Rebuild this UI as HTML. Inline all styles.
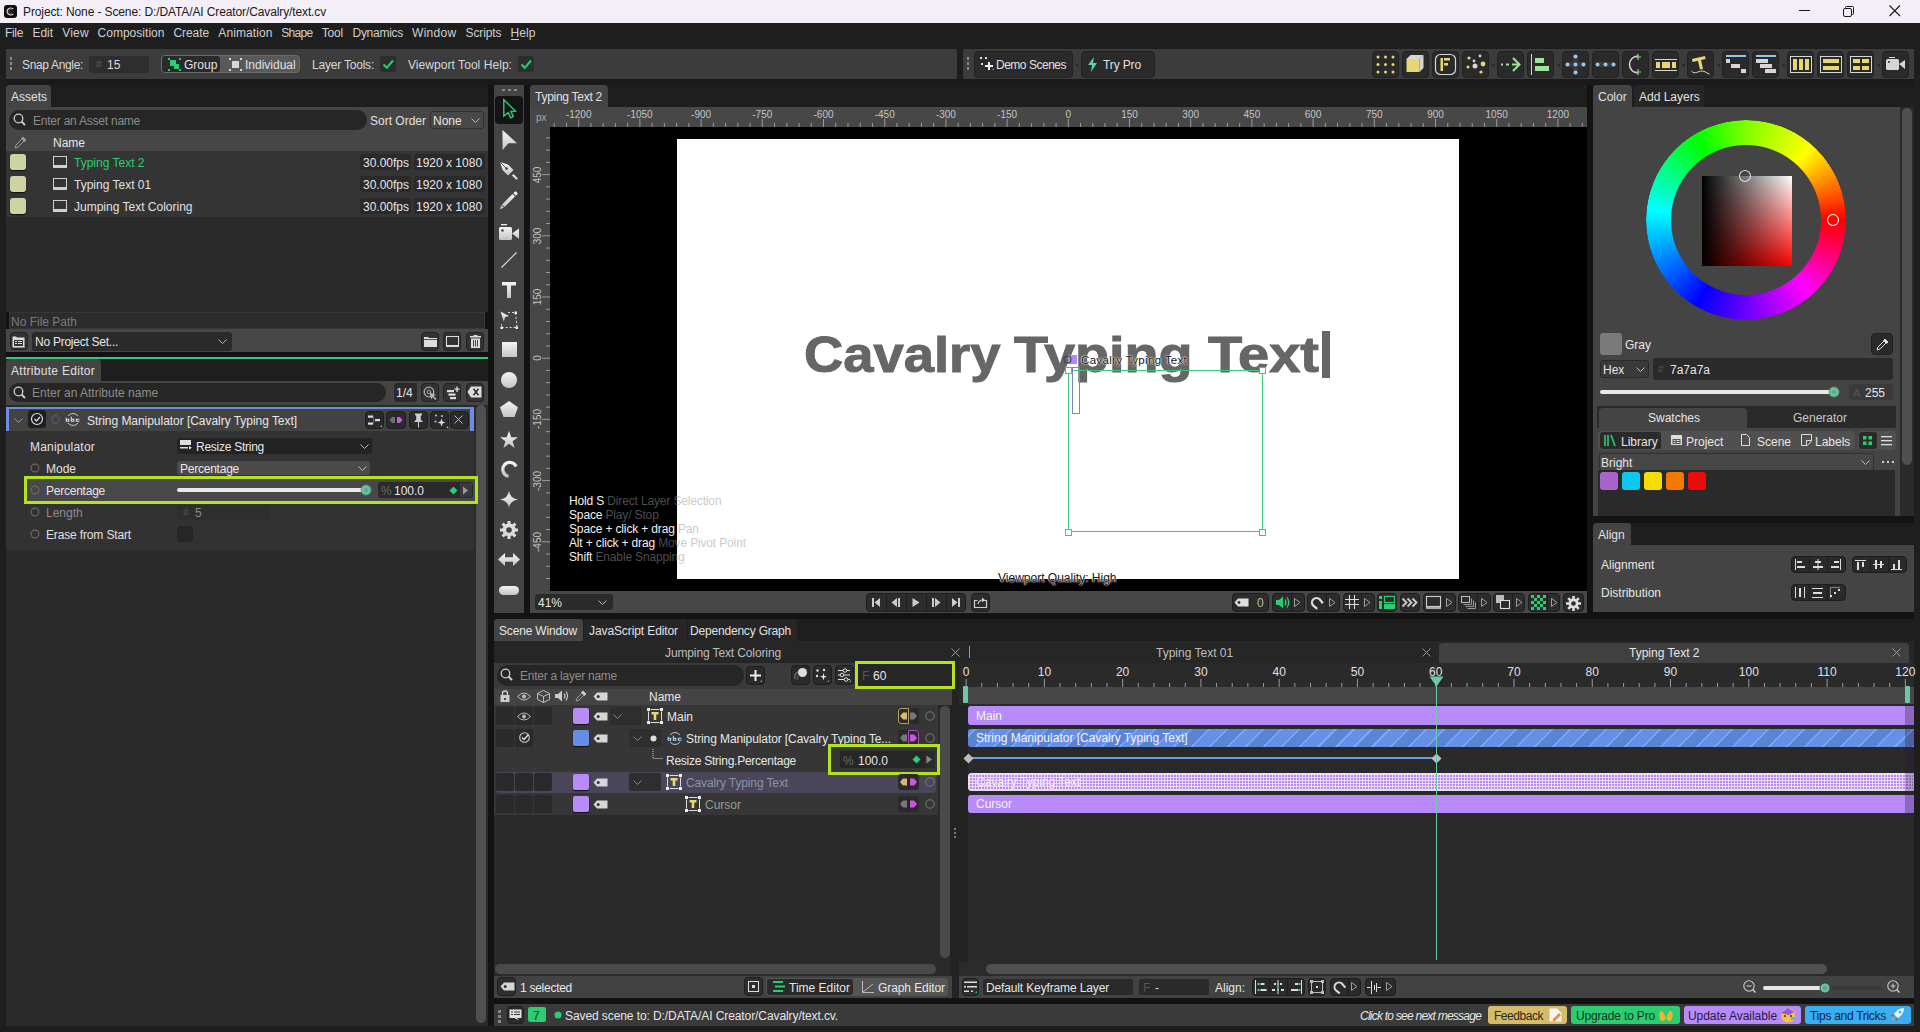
<!DOCTYPE html>
<html><head><meta charset="utf-8">
<style>
*{box-sizing:border-box;margin:0;padding:0}
html,body{width:1920px;height:1032px;overflow:hidden;background:#1e1e1e;font-family:"Liberation Sans",sans-serif;font-size:12px;color:#dcdcdc}
.a{position:absolute}
.t{position:absolute;white-space:nowrap;line-height:14px;height:14px}
svg{position:absolute;overflow:visible}
</style></head><body>
<!-- p1 -->
<div class="a" style="left:0px;top:0px;width:1920px;height:23px;background:#f4eef6"></div>
<div class="a" style="left:4px;top:5px;width:13px;height:13px;background:#0e0e0e;border-radius:3px"></div>
<svg style="left:4px;top:5px" width="13" height="13" viewBox="0 0 13 13"><path d="M9.3 4.2 A3.5 3.5 0 1 0 9.3 8.8" stroke="#d8d8d8" stroke-width="1.2" fill="none"/><path d="M8 5.2 A1.8 1.8 0 1 0 8 7.8" stroke="#777" stroke-width="0.7" fill="none"/></svg>
<div class="t" style="left:23px;top:5px;color:#1a1a1a;letter-spacing:-0.115px">Project: None - Scene: D:/DATA/AI Creator/Cavalry/text.cv</div>
<div class="a" style="left:1799px;top:10px;width:11px;height:1px;background:#1a1a1a"></div>
<svg style="left:1843px;top:6px" width="12" height="12" viewBox="0 0 12 12"><rect x="0.5" y="2.5" width="8" height="8" rx="1.5" fill="none" stroke="#1a1a1a"/><path d="M2.5 2.5V1.5Q2.5 0.5 3.5 0.5H9.5Q10.5 0.5 10.5 1.5V7.5Q10.5 8.5 9.5 8.5H8.5" fill="none" stroke="#1a1a1a"/></svg>
<svg style="left:1889px;top:5px" width="12" height="12" viewBox="0 0 12 12"><path d="M0.5 0.5L11 11M11 0.5L0.5 11" stroke="#1a1a1a" stroke-width="1.1"/></svg>
<div class="a" style="left:0px;top:23px;width:1920px;height:26px;background:#1e1e1e"></div>
<div class="t" style="left:5px;top:26px;color:#cfcfcf;letter-spacing:-0.336px">File</div>
<div class="t" style="left:32.5px;top:26px;color:#cfcfcf;letter-spacing:-0.043px">Edit</div>
<div class="t" style="left:62.3px;top:26px;color:#cfcfcf;letter-spacing:0.176px">View</div>
<div class="t" style="left:97.5px;top:26px;color:#cfcfcf;letter-spacing:0.027px">Composition</div>
<div class="t" style="left:173.5px;top:26px;color:#cfcfcf;letter-spacing:-0.086px">Create</div>
<div class="t" style="left:218.3px;top:26px;color:#cfcfcf;letter-spacing:0.093px">Animation</div>
<div class="t" style="left:281.3px;top:26px;color:#cfcfcf;letter-spacing:-0.698px">Shape</div>
<div class="t" style="left:321.8px;top:26px;color:#cfcfcf;letter-spacing:-0.204px">Tool</div>
<div class="t" style="left:352.5px;top:26px;color:#cfcfcf;letter-spacing:-0.273px">Dynamics</div>
<div class="t" style="left:412px;top:26px;color:#cfcfcf;letter-spacing:0.302px">Window</div>
<div class="t" style="left:465.5px;top:26px;color:#cfcfcf;letter-spacing:-0.096px">Scripts</div>
<div class="t" style="left:510.5px;top:26px;color:#cfcfcf;letter-spacing:0.078px">Help</div>
<div class="a" style="left:511px;top:39px;width:8px;height:1px;background:#cfcfcf"></div>
<div class="a" style="left:6px;top:79px;width:1908px;height:947px;background:#131313"></div>
<div class="a" style="left:6px;top:79px;width:1908px;height:6px;background:#1a1a1a"></div>
<div class="a" style="left:6px;top:49px;width:951px;height:30px;background:#3c3c3c"></div>
<div class="a" style="left:10px;top:57px;width:2px;height:3px;background:#8a8a8a"></div>
<div class="a" style="left:10px;top:62px;width:2px;height:3px;background:#8a8a8a"></div>
<div class="a" style="left:10px;top:67px;width:2px;height:3px;background:#8a8a8a"></div>
<div class="t" style="left:22px;top:58px;color:#d8d8d8;letter-spacing:-0.337px">Snap Angle:</div>
<div class="a" style="left:89px;top:56px;width:60px;height:17px;background:#2e2e2e;border-radius:3px"></div>
<div class="t" style="left:96px;top:58px;color:#5a5a5a;font-size:10px">#</div>
<div class="t" style="left:107px;top:58px;color:#dcdcdc">15</div>
<div class="a" style="left:161px;top:55px;width:139px;height:18px;background:#595959;border-radius:4px;border:1px solid #6a6a6a"></div>
<div class="a" style="left:162px;top:56px;width:58px;height:16px;background:#2a2a2a;border-radius:3px"></div>
<svg style="left:168px;top:58px" width="13" height="13" viewBox="0 0 13 13"><rect x="0" y="0" width="2" height="2" fill="#2ecc71"/><rect x="11" y="0" width="2" height="2" fill="#2ecc71"/><rect x="0" y="11" width="2" height="2" fill="#2ecc71"/><rect x="11" y="11" width="2" height="2" fill="#2ecc71"/><rect x="2" y="2" width="6" height="6" fill="#2ecc71"/><rect x="6" y="6" width="5" height="5" fill="#2ecc71"/></svg>
<div class="t" style="left:184px;top:58px;color:#e0e0e0">Group</div>
<svg style="left:229px;top:58px" width="13" height="13" viewBox="0 0 13 13"><rect x="0" y="0" width="2" height="2" fill="#d8d8d8"/><rect x="11" y="0" width="2" height="2" fill="#d8d8d8"/><rect x="0" y="11" width="2" height="2" fill="#d8d8d8"/><rect x="11" y="11" width="2" height="2" fill="#d8d8d8"/><rect x="3" y="3" width="7" height="7" fill="#d8d8d8"/></svg>
<div class="t" style="left:245px;top:58px;color:#e0e0e0">Individual</div>
<div class="t" style="left:312px;top:58px;color:#d8d8d8;letter-spacing:-0.206px">Layer Tools:</div>
<div class="a" style="left:380px;top:56px;width:16px;height:16px;background:#2d2d2d;border-radius:3px"></div>
<svg style="left:380px;top:56px" width="16" height="16" viewBox="0 0 16 16"><path d="M3.5 8.5L6.8 11.8L13 4.5" stroke="#2ecc71" stroke-width="2" fill="none"/></svg>
<div class="t" style="left:408px;top:58px;color:#d8d8d8;letter-spacing:0.056px">Viewport Tool Help:</div>
<div class="a" style="left:518px;top:56px;width:16px;height:16px;background:#2d2d2d;border-radius:3px"></div>
<svg style="left:518px;top:56px" width="16" height="16" viewBox="0 0 16 16"><path d="M3.5 8.5L6.8 11.8L13 4.5" stroke="#2ecc71" stroke-width="2" fill="none"/></svg>
<div class="a" style="left:963px;top:49px;width:951px;height:30px;background:#3c3c3c"></div>
<div class="a" style="left:967px;top:57px;width:2px;height:3px;background:#8a8a8a"></div>
<div class="a" style="left:967px;top:62px;width:2px;height:3px;background:#8a8a8a"></div>
<div class="a" style="left:967px;top:67px;width:2px;height:3px;background:#8a8a8a"></div>
<div class="a" style="left:974px;top:51px;width:99px;height:27px;background:#2a2a2a;border:1px solid #222;border-radius:4px"></div>
<svg style="left:980px;top:57px" width="15" height="15" viewBox="0 0 15 15"><rect x="0" y="0" width="2" height="2" fill="#ddd"/><rect x="5" y="0" width="2" height="2" fill="#ddd"/><rect x="1" y="6" width="2" height="2" fill="#ddd"/><path d="M9 5V13M5 9H13" stroke="#eee" stroke-width="2"/><path d="M12 13L14 11V13Z" fill="#2ecc71"/></svg>
<div class="t" style="left:996px;top:58px;color:#e0e0e0;letter-spacing:-0.487px">Demo Scenes</div>
<div class="a" style="left:1076px;top:64px;width:2px;height:2px;background:#2a2a2a"></div>
<div class="a" style="left:1081px;top:51px;width:74px;height:27px;background:#2a2a2a;border:1px solid #222;border-radius:4px"></div>
<svg style="left:1088px;top:57px" width="9" height="15" viewBox="0 0 9 15"><path d="M6 0L0 8H4L3 15L9 6H5Z" fill="#5fcfa9"/></svg>
<div class="t" style="left:1103px;top:58px;color:#e0e0e0;letter-spacing:-0.127px">Try Pro</div>
<div class="a" style="left:1372px;top:51px;width:27px;height:27px;background:#2a2a2a;border:1px solid #222;border-radius:4px"></div>
<div class="a" style="left:1402px;top:51px;width:27px;height:27px;background:#2a2a2a;border:1px solid #222;border-radius:4px"></div>
<div class="a" style="left:1432px;top:51px;width:27px;height:27px;background:#2a2a2a;border:1px solid #222;border-radius:4px"></div>
<div class="a" style="left:1462px;top:51px;width:27px;height:27px;background:#2a2a2a;border:1px solid #222;border-radius:4px"></div>
<div class="a" style="left:1497px;top:51px;width:27px;height:27px;background:#2a2a2a;border:1px solid #222;border-radius:4px"></div>
<div class="a" style="left:1527px;top:51px;width:27px;height:27px;background:#2a2a2a;border:1px solid #222;border-radius:4px"></div>
<div class="a" style="left:1562px;top:51px;width:27px;height:27px;background:#2a2a2a;border:1px solid #222;border-radius:4px"></div>
<div class="a" style="left:1592px;top:51px;width:27px;height:27px;background:#2a2a2a;border:1px solid #222;border-radius:4px"></div>
<div class="a" style="left:1622px;top:51px;width:27px;height:27px;background:#2a2a2a;border:1px solid #222;border-radius:4px"></div>
<div class="a" style="left:1652px;top:51px;width:27px;height:27px;background:#2a2a2a;border:1px solid #222;border-radius:4px"></div>
<div class="a" style="left:1687px;top:51px;width:27px;height:27px;background:#2a2a2a;border:1px solid #222;border-radius:4px"></div>
<div class="a" style="left:1722px;top:51px;width:27px;height:27px;background:#2a2a2a;border:1px solid #222;border-radius:4px"></div>
<div class="a" style="left:1752px;top:51px;width:27px;height:27px;background:#2a2a2a;border:1px solid #222;border-radius:4px"></div>
<div class="a" style="left:1787px;top:51px;width:27px;height:27px;background:#2a2a2a;border:1px solid #222;border-radius:4px"></div>
<div class="a" style="left:1817px;top:51px;width:27px;height:27px;background:#2a2a2a;border:1px solid #222;border-radius:4px"></div>
<div class="a" style="left:1847px;top:51px;width:27px;height:27px;background:#2a2a2a;border:1px solid #222;border-radius:4px"></div>
<div class="a" style="left:1882px;top:51px;width:27px;height:27px;background:#2a2a2a;border:1px solid #222;border-radius:4px"></div>
<div class="a" style="left:1492px;top:64px;width:3px;height:3px;background:#2a2a2a;border-radius:50%"></div>
<div class="a" style="left:1557px;top:64px;width:3px;height:3px;background:#2a2a2a;border-radius:50%"></div>
<div class="a" style="left:1682px;top:64px;width:3px;height:3px;background:#2a2a2a;border-radius:50%"></div>
<div class="a" style="left:1717px;top:64px;width:3px;height:3px;background:#2a2a2a;border-radius:50%"></div>
<div class="a" style="left:1782px;top:64px;width:3px;height:3px;background:#2a2a2a;border-radius:50%"></div>
<div class="a" style="left:1877px;top:64px;width:3px;height:3px;background:#2a2a2a;border-radius:50%"></div>
<svg style="left:1372px;top:51px" width="27" height="27" viewBox="0 0 27 27"><circle cx="6" cy="6" r="1.5" fill="#e6d774"/><circle cx="6" cy="13.5" r="1.5" fill="#e6d774"/><circle cx="6" cy="21" r="1.5" fill="#e6d774"/><circle cx="13.5" cy="6" r="1.5" fill="#e6d774"/><circle cx="13.5" cy="13.5" r="1.5" fill="#e6d774"/><circle cx="13.5" cy="21" r="1.5" fill="#e6d774"/><circle cx="21" cy="6" r="1.5" fill="#e6d774"/><circle cx="21" cy="13.5" r="1.5" fill="#e6d774"/><circle cx="21" cy="21" r="1.5" fill="#e6d774"/></svg>
<svg style="left:1402px;top:51px" width="27" height="27" viewBox="0 0 27 27"><path d="M4.5 8L8.5 4H21.5L17.5 8Z" fill="#d6d6d6"/><path d="M17.5 8L21.5 4V17L17.5 21Z" fill="#d6d6d6"/><rect x="4.5" y="8" width="13" height="13" fill="#e6d774"/></svg>
<svg style="left:1432px;top:51px" width="27" height="27" viewBox="0 0 27 27"><rect x="3.5" y="3.5" width="20" height="20" rx="5" fill="none" stroke="#d6d6d6" stroke-width="1.2"/><rect x="8.5" y="7" width="2.5" height="13" fill="#e6d774"/><rect x="12" y="7" width="6" height="2.5" fill="#e6d774"/><rect x="12" y="12" width="4" height="2.5" fill="#e6d774"/></svg>
<svg style="left:1462px;top:51px" width="27" height="27" viewBox="0 0 27 27"><circle cx="7" cy="7" r="1.6" fill="#e6d774"/><circle cx="18" cy="5" r="1.4" fill="#d6d6d6"/><circle cx="12" cy="10" r="1.4" fill="#d6d6d6"/><circle cx="21" cy="13" r="2.4" fill="#e6d774"/><circle cx="6" cy="16" r="1.5" fill="#e6d774"/><circle cx="13" cy="15" r="2.5" fill="#d6d6d6"/><circle cx="19" cy="21" r="1.6" fill="#e6d774"/></svg>
<svg style="left:1497px;top:51px" width="27" height="27" viewBox="0 0 27 27"><path d="M4 13.5H6M9 13.5H12M15 13.5H22" stroke="#9ee39a" stroke-width="2"/><path d="M16 7L22.5 13.5L16 20" stroke="#9ee39a" stroke-width="2" fill="none"/></svg>
<svg style="left:1527px;top:51px" width="27" height="27" viewBox="0 0 27 27"><rect x="4" y="3" width="1" height="21" fill="#d6d6d6"/><rect x="8" y="7" width="9" height="5" fill="#9ee39a"/><rect x="8" y="15" width="14" height="5" fill="#9ee39a"/></svg>
<svg style="left:1562px;top:51px" width="27" height="27" viewBox="0 0 27 27"><rect x="11" y="4" width="5" height="19" fill="#3a3a3a"/><rect x="4" y="11" width="19" height="5" fill="#3a3a3a"/><circle cx="13.5" cy="5.5" r="2" fill="#8ec7f7"/><circle cx="5.5" cy="13.5" r="2" fill="#8ec7f7"/><circle cx="13.5" cy="13.5" r="2" fill="#8ec7f7"/><circle cx="21.5" cy="13.5" r="2" fill="#8ec7f7"/><circle cx="13.5" cy="21.5" r="2" fill="#8ec7f7"/></svg>
<svg style="left:1592px;top:51px" width="27" height="27" viewBox="0 0 27 27"><rect x="4" y="11" width="20" height="5" rx="2" fill="#3a3a3a"/><circle cx="5.5" cy="13.5" r="2" fill="#8ec7f7"/><circle cx="13.5" cy="13.5" r="2" fill="#8ec7f7"/><circle cx="21.5" cy="13.5" r="2" fill="#8ec7f7"/></svg>
<svg style="left:1622px;top:51px" width="27" height="27" viewBox="0 0 27 27"><path d="M16 5A8.5 8.5 0 0 0 16 22" stroke="#d6d6d6" stroke-width="1.5" fill="none"/><path d="M16 3V9M13 6H19M16 18V24M13 21H19" stroke="#8fd48a" stroke-width="1.2"/></svg>
<svg style="left:1652px;top:51px" width="27" height="27" viewBox="0 0 27 27"><rect x="3" y="8" width="22" height="1" fill="#d6d6d6"/><rect x="3" y="19" width="22" height="1" fill="#d6d6d6"/><rect x="4" y="11" width="4" height="6" fill="#e6d774"/><rect x="10" y="11" width="8" height="6" fill="#e6d774"/><rect x="20" y="11" width="4" height="6" fill="#e6d774"/></svg>
<svg style="left:1687px;top:51px" width="27" height="27" viewBox="0 0 27 27"><path d="M5 8L18 5L18.6 8L14 9L16 18L13 18.6L11 9.8L5.6 11Z" fill="#e6d774"/><path d="M4.5 20C8 24 11 20 15 20C18 20 19 22 22.5 23" stroke="#d6d6d6" stroke-width="1" fill="none"/></svg>
<svg style="left:1722px;top:51px" width="27" height="27" viewBox="0 0 27 27"><rect x="4" y="4" width="20" height="2" fill="#8ec7f7"/><rect x="4" y="8" width="4" height="4" fill="#d6d6d6"/><rect x="9" y="13" width="9" height="4" fill="#d6d6d6"/><rect x="19" y="18" width="5" height="4" fill="#d6d6d6"/></svg>
<svg style="left:1752px;top:51px" width="27" height="27" viewBox="0 0 27 27"><rect x="4" y="4" width="20" height="2" fill="#8ec7f7"/><rect x="4" y="8" width="12" height="4" fill="#d6d6d6"/><rect x="8" y="13" width="12" height="4" fill="#d6d6d6"/><rect x="13" y="18" width="11" height="4" fill="#d6d6d6"/></svg>
<svg style="left:1787px;top:51px" width="27" height="27" viewBox="0 0 27 27"><rect x="3.5" y="5.5" width="21" height="16" fill="none" stroke="#d6d6d6" stroke-width="1"/><rect x="6" y="8" width="4" height="11" fill="#e6d774"/><rect x="12" y="8" width="4" height="11" fill="#e6d774"/><rect x="18" y="8" width="4" height="11" fill="#e6d774"/></svg>
<svg style="left:1817px;top:51px" width="27" height="27" viewBox="0 0 27 27"><rect x="3.5" y="5.5" width="21" height="16" fill="none" stroke="#d6d6d6" stroke-width="1"/><rect x="6" y="8" width="16" height="4" fill="#e6d774"/><rect x="6" y="15" width="16" height="4" fill="#e6d774"/></svg>
<svg style="left:1847px;top:51px" width="27" height="27" viewBox="0 0 27 27"><rect x="3.5" y="5.5" width="21" height="16" fill="none" stroke="#d6d6d6" stroke-width="1"/><rect x="6" y="8" width="7" height="4" fill="#e6d774"/><rect x="15" y="8" width="7" height="4" fill="#e6d774"/><rect x="6" y="15" width="7" height="4" fill="#e6d774"/><rect x="15" y="15" width="7" height="4" fill="#e6d774"/></svg>
<svg style="left:1882px;top:51px" width="27" height="27" viewBox="0 0 27 27"><rect x="4" y="8" width="13" height="11" rx="1.5" fill="#d6d6d6"/><rect x="7" y="6" width="6" height="1" fill="#d6d6d6"/><path d="M17 13L23 9V18Z" fill="#d6d6d6"/><circle cx="7" cy="11" r="1" fill="#2a2a2a"/></svg>
<!-- p2 -->
<div class="a" style="left:6px;top:85px;width:482px;height:22px;background:#1e1e1e"></div>
<div class="a" style="left:6px;top:85px;width:45px;height:22px;background:#444;border-radius:4px 4px 0 0"></div>
<div class="t" style="left:11px;top:90px;color:#e0e0e0">Assets</div>
<div class="a" style="left:6px;top:107px;width:482px;height:44px;background:#464646"></div>
<div class="a" style="left:9px;top:110px;width:358px;height:20px;background:#262626;border-radius:10px"></div>
<svg style="left:13px;top:113px" width="14" height="14" viewBox="0 0 14 14"><circle cx="5.5" cy="5.5" r="4.3" stroke="#cfcfcf" stroke-width="1.3" fill="none"/><path d="M8.6 8.6L12 12" stroke="#cfcfcf" stroke-width="2"/></svg>
<div class="t" style="left:33px;top:114px;color:#8c8c8c;letter-spacing:-0.229px">Enter an Asset name</div>
<div class="t" style="left:370px;top:114px;color:#e0e0e0">Sort Order</div>
<div class="a" style="left:430px;top:111px;width:54px;height:18px;background:#484848;border:1px solid #303030;border-radius:3px"></div>
<div class="t" style="left:433px;top:114px;color:#e6e6e6">None</div>
<svg style="left:471px;top:118px" width="9" height="5" viewBox="0 0 9 5"><path d="M0.5 0.5L4.5 4.5L8.5 0.5" stroke="#bbb" stroke-width="1" fill="none"/></svg>
<svg style="left:14px;top:136px" width="13" height="13" viewBox="0 0 13 13"><path d="M1 12L2 9L8 3L10 5L4 11Z" fill="none" stroke="#9a9a9a" stroke-width="1"/><path d="M7.5 2.5L10.5 5.5M9 1L12 4L10.5 5.5L7.5 2.5Z" fill="#9a9a9a" stroke="#9a9a9a"/></svg>
<div class="t" style="left:53px;top:136px;color:#e6e6e6">Name</div>
<div class="a" style="left:6px;top:151px;width:482px;height:66px;background:#343434"></div>
<div class="a" style="left:6px;top:217px;width:482px;height:95px;background:#2a2a2a"></div>
<div class="a" style="left:10px;top:154px;width:16px;height:16px;background:#cfd3a4;border-radius:3px;box-shadow:0 1px 1px #111"></div>
<svg style="left:53px;top:156px" width="14" height="12" viewBox="0 0 14 12"><rect x="0.5" y="0.5" width="13" height="9" fill="none" stroke="#cfcfcf" stroke-width="1"/><rect x="0" y="9" width="14" height="3" fill="#cfcfcf"/></svg>
<div class="t" style="left:74px;top:156px;color:#2ecc71">Typing Text 2</div>
<div class="a" style="left:360px;top:154px;width:51px;height:16px;background:#2a2a2a;border-radius:3px"></div>
<div class="t" style="left:363px;top:156px;color:#e6e6e6">30.00fps</div>
<div class="a" style="left:414px;top:154px;width:71px;height:16px;background:#2a2a2a;border-radius:3px"></div>
<div class="t" style="left:416px;top:156px;color:#e6e6e6">1920 x 1080</div>
<div class="a" style="left:10px;top:176px;width:16px;height:16px;background:#cfd3a4;border-radius:3px;box-shadow:0 1px 1px #111"></div>
<svg style="left:53px;top:178px" width="14" height="12" viewBox="0 0 14 12"><rect x="0.5" y="0.5" width="13" height="9" fill="none" stroke="#cfcfcf" stroke-width="1"/><rect x="0" y="9" width="14" height="3" fill="#cfcfcf"/></svg>
<div class="t" style="left:74px;top:178px;color:#e0e0e0">Typing Text 01</div>
<div class="a" style="left:360px;top:176px;width:51px;height:16px;background:#2a2a2a;border-radius:3px"></div>
<div class="t" style="left:363px;top:178px;color:#e6e6e6">30.00fps</div>
<div class="a" style="left:414px;top:176px;width:71px;height:16px;background:#2a2a2a;border-radius:3px"></div>
<div class="t" style="left:416px;top:178px;color:#e6e6e6">1920 x 1080</div>
<div class="a" style="left:10px;top:198px;width:16px;height:16px;background:#cfd3a4;border-radius:3px;box-shadow:0 1px 1px #111"></div>
<svg style="left:53px;top:200px" width="14" height="12" viewBox="0 0 14 12"><rect x="0.5" y="0.5" width="13" height="9" fill="none" stroke="#cfcfcf" stroke-width="1"/><rect x="0" y="9" width="14" height="3" fill="#cfcfcf"/></svg>
<div class="t" style="left:74px;top:200px;color:#e0e0e0">Jumping Text Coloring</div>
<div class="a" style="left:360px;top:198px;width:51px;height:16px;background:#2a2a2a;border-radius:3px"></div>
<div class="t" style="left:363px;top:200px;color:#e6e6e6">30.00fps</div>
<div class="a" style="left:414px;top:198px;width:71px;height:16px;background:#2a2a2a;border-radius:3px"></div>
<div class="t" style="left:416px;top:200px;color:#e6e6e6">1920 x 1080</div>
<div class="a" style="left:9px;top:312px;width:476px;height:17px;background:#2c2c2c;border:1px solid #363636"></div>
<div class="t" style="left:11px;top:315px;color:#7a7a7a">No File Path</div>
<div class="a" style="left:6px;top:329px;width:482px;height:23px;background:#474747"></div>
<div class="a" style="left:10px;top:332px;width:18px;height:18px;background:#333;border:1px solid #222;border-radius:4px"></div>
<svg style="left:12px;top:335px" width="14" height="13" viewBox="0 0 14 13"><path d="M0.5 1.5H4L5 2.5H12.5V12.5H0.5Z" fill="#ddd"/><rect x="2" y="5" width="9" height="6" fill="#333"/><rect x="3" y="6" width="2" height="1" fill="#ddd"/><rect x="6" y="6" width="4" height="1" fill="#ddd"/><rect x="3" y="8" width="2" height="1" fill="#ddd"/><rect x="6" y="8" width="4" height="1" fill="#ddd"/><path d="M13 11L11 13H13Z" fill="#2ecc71"/></svg>
<div class="a" style="left:32px;top:332px;width:200px;height:19px;background:#2a2a2a;border-radius:3px"></div>
<div class="t" style="left:35px;top:335px;color:#e6e6e6;letter-spacing:-0.255px">No Project Set...</div>
<svg style="left:218px;top:339px" width="9" height="5" viewBox="0 0 9 5"><path d="M0.5 0.5L4.5 4.5L8.5 0.5" stroke="#bbb" stroke-width="1" fill="none"/></svg>
<div class="a" style="left:421px;top:332px;width:18px;height:19px;background:#333;border:1px solid #222;border-radius:4px"></div>
<div class="a" style="left:443px;top:332px;width:18px;height:19px;background:#333;border:1px solid #222;border-radius:4px"></div>
<div class="a" style="left:466px;top:332px;width:18px;height:19px;background:#333;border:1px solid #222;border-radius:4px"></div>
<svg style="left:424px;top:336px" width="13" height="11" viewBox="0 0 13 11"><path d="M0 1H4L5 2H13V11H0Z" fill="#ddd"/><rect x="0" y="3" width="13" height="0.8" fill="#333"/></svg>
<svg style="left:446px;top:336px" width="13" height="11" viewBox="0 0 13 11"><rect x="0.5" y="0.5" width="12" height="9" fill="none" stroke="#ddd" stroke-width="1"/><rect x="0" y="9" width="13" height="2" fill="#ddd"/></svg>
<svg style="left:470px;top:335px" width="11" height="13" viewBox="0 0 11 13"><rect x="0" y="1" width="11" height="1.5" fill="#ddd"/><rect x="3.5" y="0" width="4" height="1.5" fill="#ddd"/><path d="M1 3.5H10V13H1Z" fill="#ddd"/><path d="M3.5 5V11.5M5.5 5V11.5M7.5 5V11.5" stroke="#333" stroke-width="0.9"/></svg>
<div class="a" style="left:6px;top:352px;width:482px;height:5px;background:#121212"></div>
<div class="a" style="left:6px;top:357px;width:482px;height:2px;background:#2ecc71"></div>
<div class="a" style="left:6px;top:359px;width:482px;height:22px;background:#1e1e1e"></div>
<div class="a" style="left:6px;top:359px;width:95px;height:22px;background:#444;border-radius:4px 4px 0 0"></div>
<div class="t" style="left:11px;top:364px;color:#e0e0e0;letter-spacing:0.291px">Attribute Editor</div>
<div class="a" style="left:6px;top:381px;width:482px;height:24px;background:#444"></div>
<div class="a" style="left:9px;top:383px;width:377px;height:19px;background:#262626;border-radius:10px"></div>
<svg style="left:13px;top:386px" width="14" height="14" viewBox="0 0 14 14"><circle cx="5.5" cy="5.5" r="4.3" stroke="#cfcfcf" stroke-width="1.3" fill="none"/><path d="M8.6 8.6L12 12" stroke="#cfcfcf" stroke-width="2"/></svg>
<div class="t" style="left:32px;top:386px;color:#8c8c8c;letter-spacing:-0.001px">Enter an Attribute name</div>
<div class="a" style="left:394px;top:383px;width:23px;height:19px;background:#2a2a2a;border-radius:3px"></div>
<div class="t" style="left:396px;top:386px;color:#e6e6e6">1/4</div>
<div class="a" style="left:421px;top:383px;width:18px;height:19px;background:#333;border:1px solid #222;border-radius:4px"></div>
<div class="a" style="left:443px;top:383px;width:18px;height:19px;background:#333;border:1px solid #222;border-radius:4px"></div>
<div class="a" style="left:466px;top:383px;width:18px;height:19px;background:#333;border:1px solid #222;border-radius:4px"></div>
<svg style="left:423px;top:386px" width="15" height="14" viewBox="0 0 15 14"><circle cx="6" cy="6" r="4.8" fill="none" stroke="#aaa" stroke-width="1.3"/><circle cx="6" cy="6" r="1.8" fill="none" stroke="#aaa" stroke-width="1"/><path d="M6.5 6.5L13 9L10.5 10L13.5 13L12.5 14L9.5 11L8.5 13.5Z" fill="#bbb"/></svg>
<svg style="left:446px;top:386px" width="14" height="14" viewBox="0 0 14 14"><rect x="1" y="4" width="7" height="2.2" fill="#ddd"/><rect x="2.5" y="7.5" width="7" height="2.2" fill="#ddd"/><rect x="4" y="11" width="6" height="2.2" fill="#ddd"/><path d="M11 0.5V6M8.3 3.2H13.7" stroke="#ddd" stroke-width="1.3"/></svg>
<svg style="left:467px;top:386px" width="15" height="12" viewBox="0 0 15 12"><path d="M4 0.5H14.5V11.5H4L0.5 6Z" fill="#ddd"/><path d="M6.5 2.8L11.5 9.2M11.5 2.8L6.5 9.2" stroke="#222" stroke-width="1.4"/></svg>
<div class="a" style="left:6px;top:405px;width:482px;height:621px;background:#2a2a2a"></div>
<div class="a" style="left:476px;top:405px;width:10px;height:618px;background:#505050;border-radius:5px"></div>
<div class="a" style="left:6px;top:407px;width:468px;height:24px;background:#424242;border-left:3px solid #6b8de0;border-top:2px solid #6b8de0;border-right:4px solid #6b8de0"></div>
<svg style="left:14px;top:418px" width="9" height="5" viewBox="0 0 9 5"><path d="M0.5 0.5L4.5 4.5L8.5 0.5" stroke="#9a9a9a" stroke-width="1" fill="none"/></svg>
<div class="a" style="left:28px;top:410px;width:18px;height:18px;background:#1e1e1e;border-radius:3px"></div>
<svg style="left:30px;top:412px" width="14" height="14" viewBox="0 0 14 14"><circle cx="7" cy="7" r="5.5" fill="none" stroke="#ddd" stroke-width="1.2"/><path d="M4.5 7L6.5 9L10 5" stroke="#ddd" stroke-width="1.3" fill="none"/></svg>
<svg style="left:51px;top:415px" width="9" height="9" viewBox="0 0 9 9"><circle cx="4.5" cy="4.5" r="3.8" fill="none" stroke="#5a5a5a" stroke-width="1.2"/></svg>
<svg style="left:65px;top:412px" width="16" height="15" viewBox="0 0 16 15"><path d="M3 4A6.3 6.3 0 0 1 13 4M3 11A6.3 6.3 0 0 0 13 11" stroke="#c8c8c8" stroke-width="1" fill="none"/><path d="M1.2 5.8V9.3H3.7V7.2H1.2M6.3 4.8V9.3H8.8V7.2H6.3M14.5 7.2H11.4V9.3H14.5" stroke="#ddd" stroke-width="1.1" fill="none"/></svg>
<div class="t" style="left:87px;top:414px;color:#e6e6e6;letter-spacing:-0.041px">String Manipulator [Cavalry Typing Text]</div>
<div class="a" style="left:365px;top:411px;width:19px;height:18px;background:#2a2a2a;border:1px solid #1e1e1e;border-radius:4px"></div>
<svg style="left:367px;top:414px" width="15" height="13" viewBox="0 0 15 13"><rect x="1" y="1.5" width="5" height="2.2" fill="#ddd"/><rect x="1" y="8.5" width="5" height="2.2" fill="#ddd"/><rect x="8" y="5" width="5" height="2.2" fill="#ddd"/><rect x="6" y="2.5" width="1" height="7" fill="#666"/><path d="M15 11L13 13H15Z" fill="#5fcfa9"/></svg>
<div class="a" style="left:386px;top:411px;width:20px;height:18px;background:#2a2a2a;border:1px solid #1e1e1e;border-radius:4px"></div>
<svg style="left:388px;top:414px" width="16" height="12" viewBox="0 0 16 12"><path d="M7 3V9H4L1.5 6L4 3Z" fill="#707070"/><path d="M9 3V9H12L14.5 6L12 3Z" fill="#cc55ee"/><rect x="7.6" y="0" width="0.8" height="12" fill="#222"/></svg>
<div class="a" style="left:409px;top:411px;width:19px;height:18px;background:#2a2a2a;border:1px solid #1e1e1e;border-radius:4px"></div>
<svg style="left:412px;top:413px" width="13" height="15" viewBox="0 0 13 15"><path d="M3 0.5H10V2L8.8 3V6.5L11 9H2L4.2 6.5V3L3 2Z" fill="#ccc"/><rect x="6" y="9" width="1" height="5.5" fill="#ccc"/></svg>
<div class="a" style="left:430px;top:411px;width:19px;height:18px;background:#2a2a2a;border:1px solid #1e1e1e;border-radius:4px"></div>
<svg style="left:433px;top:413px" width="15" height="15" viewBox="0 0 15 15"><circle cx="3" cy="2.5" r="1.1" fill="#bbb"/><circle cx="9" cy="3" r="1.1" fill="#bbb"/><circle cx="2.5" cy="8.5" r="1.1" fill="#bbb"/><path d="M8.5 5.5L9.5 8.5L12.5 9.5L9.5 10.5L8.5 13.5L7.5 10.5L4.5 9.5L7.5 8.5Z" fill="#ddd"/><path d="M15 13L13 15H15Z" fill="#5fcfa9"/></svg>
<div class="a" style="left:450px;top:411px;width:19px;height:18px;background:#2a2a2a;border:1px solid #1e1e1e;border-radius:4px"></div>
<svg style="left:454px;top:415px" width="10" height="10" viewBox="0 0 10 10"><path d="M0.5 0.5L8.5 8.5M8.5 0.5L0.5 8.5" stroke="#ccc" stroke-width="0.9"/></svg>
<div class="a" style="left:6px;top:431px;width:468px;height:119px;background:#323232"></div>
<div class="t" style="left:30px;top:440px;color:#e0e0e0;letter-spacing:0.209px">Manipulator</div>
<div class="a" style="left:177px;top:438px;width:195px;height:16px;background:#232323;border-radius:3px"></div>
<svg style="left:180px;top:440px" width="13" height="11" viewBox="0 0 13 11"><rect x="0" y="0" width="11" height="5" fill="#ddd"/><rect x="0" y="7" width="8" height="1.5" fill="#ddd"/><path d="M9 6L12 7.7L9 9.5Z" fill="#ddd"/></svg>
<div class="t" style="left:196px;top:440px;color:#e6e6e6;letter-spacing:-0.258px">Resize String</div>
<svg style="left:360px;top:444px" width="9" height="5" viewBox="0 0 9 5"><path d="M0.5 0.5L4.5 4.5L8.5 0.5" stroke="#bbb" stroke-width="1" fill="none"/></svg>
<svg style="left:30px;top:463px" width="10" height="10" viewBox="0 0 10 10"><circle cx="5" cy="5" r="3.9" fill="none" stroke="#6a6a6a" stroke-width="1.1"/></svg>
<div class="t" style="left:46px;top:462px;color:#e0e0e0">Mode</div>
<div class="a" style="left:177px;top:461px;width:193px;height:14px;background:#4a4a4a;border-radius:3px"></div>
<div class="t" style="left:180px;top:462px;color:#e6e6e6;letter-spacing:-0.236px">Percentage</div>
<svg style="left:358px;top:466px" width="9" height="5" viewBox="0 0 9 5"><path d="M0.5 0.5L4.5 4.5L8.5 0.5" stroke="#bbb" stroke-width="1" fill="none"/></svg>
<div class="a" style="left:24px;top:476px;width:454px;height:28px;background:#484848;border:3px solid #b3e21e"></div>
<svg style="left:30px;top:485px" width="10" height="10" viewBox="0 0 10 10"><circle cx="5" cy="5" r="3.9" fill="none" stroke="#6a6a6a" stroke-width="1.1"/></svg>
<div class="t" style="left:46px;top:484px;color:#e6e6e6;letter-spacing:-0.236px">Percentage</div>
<div class="a" style="left:177px;top:488px;width:190px;height:4px;background:#e8e8e8;border-radius:2px"></div>
<svg style="left:360px;top:484px" width="12" height="12" viewBox="0 0 12 12"><circle cx="6" cy="6" r="5" fill="#6dbf9d" stroke="#4a9a7a" stroke-width="0.8"/><circle cx="6" cy="6" r="2" fill="#5aa888"/></svg>
<div class="a" style="left:378px;top:482px;width:95px;height:16px;background:#2a2a2a;border-radius:3px"></div>
<div class="t" style="left:381px;top:484px;color:#6a6a6a">%</div>
<div class="t" style="left:394px;top:484px;color:#e6e6e6">100.0</div>
<svg style="left:449px;top:486px" width="9" height="9" viewBox="0 0 9 9"><path d="M4.5 0.5L8.5 4.5L4.5 8.5L0.5 4.5Z" fill="#2ecc71"/></svg>
<div class="a" style="left:460px;top:483px;width:12px;height:14px;background:#3a3a3a"></div>
<svg style="left:462px;top:486px" width="7" height="9" viewBox="0 0 7 9"><path d="M1 0.5L6 4.5L1 8.5Z" fill="#9a9a9a"/></svg>
<svg style="left:30px;top:507px" width="10" height="10" viewBox="0 0 10 10"><circle cx="5" cy="5" r="3.9" fill="none" stroke="#6a6a6a" stroke-width="1.1"/></svg>
<div class="t" style="left:46px;top:506px;color:#8c8c8c">Length</div>
<div class="a" style="left:177px;top:505px;width:93px;height:15px;background:#2e2e2e;border-radius:3px"></div>
<div class="t" style="left:183px;top:506px;color:#555;font-size:10px">#</div>
<div class="t" style="left:195px;top:506px;color:#8c8c8c">5</div>
<svg style="left:30px;top:529px" width="10" height="10" viewBox="0 0 10 10"><circle cx="5" cy="5" r="3.9" fill="none" stroke="#6a6a6a" stroke-width="1.1"/></svg>
<div class="t" style="left:46px;top:528px;color:#e0e0e0;letter-spacing:-0.146px">Erase from Start</div>
<div class="a" style="left:177px;top:526px;width:16px;height:16px;background:#262626;border-radius:3px"></div>
<!-- p3 -->
<svg style="left:0px;top:0px" width="1" height="1" viewBox="0 0 1 1"><defs><linearGradient id="tg" x1="0" y1="0" x2="0" y2="1"><stop offset="0" stop-color="#f4f4f4"/><stop offset="1" stop-color="#c4c4c4"/></linearGradient></defs></svg>
<div class="a" style="left:494px;top:85px;width:30px;height:528px;background:#444"></div>
<div class="a" style="left:502px;top:89px;width:3px;height:2px;background:#8a8a8a"></div>
<div class="a" style="left:508px;top:89px;width:3px;height:2px;background:#8a8a8a"></div>
<div class="a" style="left:514px;top:89px;width:3px;height:2px;background:#8a8a8a"></div>
<div class="a" style="left:495px;top:96px;width:28px;height:28px;background:#141414;border-radius:4px"></div>
<svg style="left:503px;top:99px" width="14" height="20" viewBox="0 0 14 20"><path d="M0.8 0.8L12.5 12.2L8 12.4L10.3 17.6L7.6 18.8L5.3 13.6L0.8 17Z" fill="none" stroke="#2ecc71" stroke-width="1.4" stroke-linejoin="miter"/></svg>
<svg style="left:502px;top:130px" width="16" height="20" viewBox="0 0 16 20"><path d="M0.5 0L15 13.2H6.5L0.5 20Z" fill="url(#tg)"/></svg>
<svg style="left:500px;top:162px" width="18" height="18" viewBox="0 0 18 18"><path d="M0 0L8 2.5L13.5 8L8 13.5L2.5 8Z" fill="url(#tg)"/><path d="M0 0L6.2 6.2" stroke="#444" stroke-width="0.9"/><circle cx="6.6" cy="6.6" r="1.3" fill="#444"/><path d="M12 13.6L13.6 12L18 16.4L16.4 18Z" fill="url(#tg)"/></svg>
<svg style="left:499px;top:191px" width="19" height="19" viewBox="0 0 19 19"><path d="M3 13.5L13.5 3L16 5.5L5.5 16Z" fill="url(#tg)"/><path d="M14.3 2.2L15.8 0.7Q16.5 0 17.3 0.7L18.3 1.7Q19 2.5 18.3 3.2L16.8 4.7Z" fill="#eee"/><path d="M2.5 14L5 16.5L0.5 18.5Z" fill="#bbb"/></svg>
<svg style="left:499px;top:223px" width="20" height="17" viewBox="0 0 20 17"><rect x="0" y="4" width="13" height="13" rx="1.5" fill="url(#tg)"/><rect x="2" y="1" width="6" height="1.3" fill="#eee"/><path d="M13 10.5L20 5.5V16Z" fill="url(#tg)"/><circle cx="3.5" cy="7.5" r="1.3" fill="#444"/></svg>
<svg style="left:501px;top:252px" width="16" height="16" viewBox="0 0 16 16"><path d="M0.5 15.5L15.5 0.5" stroke="#ddd" stroke-width="1.2"/></svg>
<svg style="left:502px;top:282px" width="14" height="16" viewBox="0 0 14 16"><path d="M0 0H14V3.5H9V16H5V3.5H0Z" fill="url(#tg)"/></svg>
<svg style="left:500px;top:311px" width="18" height="18" viewBox="0 0 18 18"><path d="M0.5 0.5L9 5L5 6.2L3.8 10.5Z" fill="url(#tg)"/><path d="M8 1.5H15.5L17 16.5H1.5V13" fill="none" stroke="#ddd" stroke-width="1" stroke-dasharray="2 2"/><rect x="14.5" y="0.5" width="2.5" height="2.5" fill="#eee"/><rect x="15.5" y="15.5" width="2.5" height="2.5" fill="#eee"/><rect x="0.5" y="15.5" width="2.5" height="2.5" fill="#eee"/></svg>
<svg style="left:502px;top:342px" width="15" height="15" viewBox="0 0 15 15"><rect x="0" y="0" width="15" height="15" fill="url(#tg)"/></svg>
<svg style="left:501px;top:372px" width="16" height="16" viewBox="0 0 16 16"><circle cx="8" cy="8" r="8" fill="url(#tg)"/></svg>
<svg style="left:500px;top:401px" width="18" height="16" viewBox="0 0 18 16"><path d="M9 0L18 6.3L14.5 16H3.5L0 6.3Z" fill="url(#tg)"/></svg>
<svg style="left:500px;top:431px" width="18" height="17" viewBox="0 0 18 17"><path d="M9 0L11.3 6.2H18L12.6 10.2L14.6 17L9 12.8L3.4 17L5.4 10.2L0 6.2H6.7Z" fill="url(#tg)"/></svg>
<svg style="left:501px;top:461px" width="17" height="17" viewBox="0 0 17 17"><path d="M15.2 5.5A7 7 0 1 0 7.5 15.3" stroke="url(#tg)" stroke-width="3.2" fill="none"/></svg>
<svg style="left:500px;top:491px" width="18" height="17" viewBox="0 0 18 17"><path d="M9 0Q10 7.5 18 8.5Q10 9.5 9 17Q8 9.5 0 8.5Q8 7.5 9 0Z" fill="url(#tg)"/></svg>
<svg style="left:500px;top:521px" width="18" height="18" viewBox="0 0 18 18"><circle cx="9" cy="9" r="6.5" fill="url(#tg)"/><path d="M9 0V18M0 9H18M2.6 2.6L15.4 15.4M15.4 2.6L2.6 15.4" stroke="#ddd" stroke-width="3"/><circle cx="9" cy="9" r="2.8" fill="#444"/></svg>
<svg style="left:498px;top:553px" width="22" height="13" viewBox="0 0 22 13"><path d="M0 6.5L7 0V4.3H15V0L22 6.5L15 13V8.7H7V13Z" fill="url(#tg)"/></svg>
<svg style="left:499px;top:586px" width="20" height="9" viewBox="0 0 20 9"><rect x="0" y="0" width="20" height="9" rx="4.5" fill="url(#tg)"/></svg>
<div class="a" style="left:530px;top:85px;width:1057px;height:22px;background:#1e1e1e"></div>
<div class="a" style="left:530px;top:85px;width:78px;height:22px;background:#444;border-radius:4px 4px 0 0"></div>
<div class="t" style="left:535px;top:90px;color:#e0e0e0;letter-spacing:-0.267px">Typing Text 2</div>
<div class="a" style="left:530px;top:107px;width:1057px;height:506px;background:#474747"></div>
<div class="t" style="left:536px;top:111px;color:#a8a8a8;font-size:10px">px</div>
<svg style="left:0px;top:107px" width="1920" height="20" viewBox="0 0 1920 20"><rect x="553.72" y="16" width="1" height="4" fill="#9a9a9a"/><rect x="565.96" y="16" width="1" height="4" fill="#9a9a9a"/><rect x="578.20" y="12" width="1" height="8" fill="#9a9a9a"/><rect x="590.44" y="16" width="1" height="4" fill="#9a9a9a"/><rect x="602.68" y="16" width="1" height="4" fill="#9a9a9a"/><rect x="614.92" y="16" width="1" height="4" fill="#9a9a9a"/><rect x="627.16" y="16" width="1" height="4" fill="#9a9a9a"/><rect x="639.40" y="12" width="1" height="8" fill="#9a9a9a"/><rect x="651.64" y="16" width="1" height="4" fill="#9a9a9a"/><rect x="663.88" y="16" width="1" height="4" fill="#9a9a9a"/><rect x="676.12" y="16" width="1" height="4" fill="#9a9a9a"/><rect x="688.36" y="16" width="1" height="4" fill="#9a9a9a"/><rect x="700.60" y="12" width="1" height="8" fill="#9a9a9a"/><rect x="712.84" y="16" width="1" height="4" fill="#9a9a9a"/><rect x="725.08" y="16" width="1" height="4" fill="#9a9a9a"/><rect x="737.32" y="16" width="1" height="4" fill="#9a9a9a"/><rect x="749.56" y="16" width="1" height="4" fill="#9a9a9a"/><rect x="761.80" y="12" width="1" height="8" fill="#9a9a9a"/><rect x="774.04" y="16" width="1" height="4" fill="#9a9a9a"/><rect x="786.28" y="16" width="1" height="4" fill="#9a9a9a"/><rect x="798.52" y="16" width="1" height="4" fill="#9a9a9a"/><rect x="810.76" y="16" width="1" height="4" fill="#9a9a9a"/><rect x="823.00" y="12" width="1" height="8" fill="#9a9a9a"/><rect x="835.24" y="16" width="1" height="4" fill="#9a9a9a"/><rect x="847.48" y="16" width="1" height="4" fill="#9a9a9a"/><rect x="859.72" y="16" width="1" height="4" fill="#9a9a9a"/><rect x="871.96" y="16" width="1" height="4" fill="#9a9a9a"/><rect x="884.20" y="12" width="1" height="8" fill="#9a9a9a"/><rect x="896.44" y="16" width="1" height="4" fill="#9a9a9a"/><rect x="908.68" y="16" width="1" height="4" fill="#9a9a9a"/><rect x="920.92" y="16" width="1" height="4" fill="#9a9a9a"/><rect x="933.16" y="16" width="1" height="4" fill="#9a9a9a"/><rect x="945.40" y="12" width="1" height="8" fill="#9a9a9a"/><rect x="957.64" y="16" width="1" height="4" fill="#9a9a9a"/><rect x="969.88" y="16" width="1" height="4" fill="#9a9a9a"/><rect x="982.12" y="16" width="1" height="4" fill="#9a9a9a"/><rect x="994.36" y="16" width="1" height="4" fill="#9a9a9a"/><rect x="1006.60" y="12" width="1" height="8" fill="#9a9a9a"/><rect x="1018.84" y="16" width="1" height="4" fill="#9a9a9a"/><rect x="1031.08" y="16" width="1" height="4" fill="#9a9a9a"/><rect x="1043.32" y="16" width="1" height="4" fill="#9a9a9a"/><rect x="1055.56" y="16" width="1" height="4" fill="#9a9a9a"/><rect x="1067.80" y="12" width="1" height="8" fill="#9a9a9a"/><rect x="1080.04" y="16" width="1" height="4" fill="#9a9a9a"/><rect x="1092.28" y="16" width="1" height="4" fill="#9a9a9a"/><rect x="1104.52" y="16" width="1" height="4" fill="#9a9a9a"/><rect x="1116.76" y="16" width="1" height="4" fill="#9a9a9a"/><rect x="1129.00" y="12" width="1" height="8" fill="#9a9a9a"/><rect x="1141.24" y="16" width="1" height="4" fill="#9a9a9a"/><rect x="1153.48" y="16" width="1" height="4" fill="#9a9a9a"/><rect x="1165.72" y="16" width="1" height="4" fill="#9a9a9a"/><rect x="1177.96" y="16" width="1" height="4" fill="#9a9a9a"/><rect x="1190.20" y="12" width="1" height="8" fill="#9a9a9a"/><rect x="1202.44" y="16" width="1" height="4" fill="#9a9a9a"/><rect x="1214.68" y="16" width="1" height="4" fill="#9a9a9a"/><rect x="1226.92" y="16" width="1" height="4" fill="#9a9a9a"/><rect x="1239.16" y="16" width="1" height="4" fill="#9a9a9a"/><rect x="1251.40" y="12" width="1" height="8" fill="#9a9a9a"/><rect x="1263.64" y="16" width="1" height="4" fill="#9a9a9a"/><rect x="1275.88" y="16" width="1" height="4" fill="#9a9a9a"/><rect x="1288.12" y="16" width="1" height="4" fill="#9a9a9a"/><rect x="1300.36" y="16" width="1" height="4" fill="#9a9a9a"/><rect x="1312.60" y="12" width="1" height="8" fill="#9a9a9a"/><rect x="1324.84" y="16" width="1" height="4" fill="#9a9a9a"/><rect x="1337.08" y="16" width="1" height="4" fill="#9a9a9a"/><rect x="1349.32" y="16" width="1" height="4" fill="#9a9a9a"/><rect x="1361.56" y="16" width="1" height="4" fill="#9a9a9a"/><rect x="1373.80" y="12" width="1" height="8" fill="#9a9a9a"/><rect x="1386.04" y="16" width="1" height="4" fill="#9a9a9a"/><rect x="1398.28" y="16" width="1" height="4" fill="#9a9a9a"/><rect x="1410.52" y="16" width="1" height="4" fill="#9a9a9a"/><rect x="1422.76" y="16" width="1" height="4" fill="#9a9a9a"/><rect x="1435.00" y="12" width="1" height="8" fill="#9a9a9a"/><rect x="1447.24" y="16" width="1" height="4" fill="#9a9a9a"/><rect x="1459.48" y="16" width="1" height="4" fill="#9a9a9a"/><rect x="1471.72" y="16" width="1" height="4" fill="#9a9a9a"/><rect x="1483.96" y="16" width="1" height="4" fill="#9a9a9a"/><rect x="1496.20" y="12" width="1" height="8" fill="#9a9a9a"/><rect x="1508.44" y="16" width="1" height="4" fill="#9a9a9a"/><rect x="1520.68" y="16" width="1" height="4" fill="#9a9a9a"/><rect x="1532.92" y="16" width="1" height="4" fill="#9a9a9a"/><rect x="1545.16" y="16" width="1" height="4" fill="#9a9a9a"/><rect x="1557.40" y="12" width="1" height="8" fill="#9a9a9a"/><rect x="1569.64" y="16" width="1" height="4" fill="#9a9a9a"/><rect x="1581.88" y="16" width="1" height="4" fill="#9a9a9a"/></svg>
<div class="t" style="left:548.7px;top:108px;width:60px;text-align:center;font-size:10px;color:#c4c4c4">-1200</div>
<div class="t" style="left:609.9px;top:108px;width:60px;text-align:center;font-size:10px;color:#c4c4c4">-1050</div>
<div class="t" style="left:671.1px;top:108px;width:60px;text-align:center;font-size:10px;color:#c4c4c4">-900</div>
<div class="t" style="left:732.3px;top:108px;width:60px;text-align:center;font-size:10px;color:#c4c4c4">-750</div>
<div class="t" style="left:793.5px;top:108px;width:60px;text-align:center;font-size:10px;color:#c4c4c4">-600</div>
<div class="t" style="left:854.7px;top:108px;width:60px;text-align:center;font-size:10px;color:#c4c4c4">-450</div>
<div class="t" style="left:915.9px;top:108px;width:60px;text-align:center;font-size:10px;color:#c4c4c4">-300</div>
<div class="t" style="left:977.1px;top:108px;width:60px;text-align:center;font-size:10px;color:#c4c4c4">-150</div>
<div class="t" style="left:1038.3px;top:108px;width:60px;text-align:center;font-size:10px;color:#c4c4c4">0</div>
<div class="t" style="left:1099.5px;top:108px;width:60px;text-align:center;font-size:10px;color:#c4c4c4">150</div>
<div class="t" style="left:1160.7px;top:108px;width:60px;text-align:center;font-size:10px;color:#c4c4c4">300</div>
<div class="t" style="left:1221.9px;top:108px;width:60px;text-align:center;font-size:10px;color:#c4c4c4">450</div>
<div class="t" style="left:1283.1px;top:108px;width:60px;text-align:center;font-size:10px;color:#c4c4c4">600</div>
<div class="t" style="left:1344.3px;top:108px;width:60px;text-align:center;font-size:10px;color:#c4c4c4">750</div>
<div class="t" style="left:1405.5px;top:108px;width:60px;text-align:center;font-size:10px;color:#c4c4c4">900</div>
<div class="t" style="left:1466.7px;top:108px;width:60px;text-align:center;font-size:10px;color:#c4c4c4">1050</div>
<div class="t" style="left:1527.9px;top:108px;width:60px;text-align:center;font-size:10px;color:#c4c4c4">1200</div>
<svg style="left:530px;top:0px" width="20" height="1032" viewBox="0 0 20 1032"><rect x="16" y="578.02" width="4" height="1" fill="#9a9a9a"/><rect x="16" y="565.78" width="4" height="1" fill="#9a9a9a"/><rect x="16" y="553.54" width="4" height="1" fill="#9a9a9a"/><rect x="12" y="541.30" width="8" height="1" fill="#9a9a9a"/><rect x="16" y="529.06" width="4" height="1" fill="#9a9a9a"/><rect x="16" y="516.82" width="4" height="1" fill="#9a9a9a"/><rect x="16" y="504.58" width="4" height="1" fill="#9a9a9a"/><rect x="16" y="492.34" width="4" height="1" fill="#9a9a9a"/><rect x="12" y="480.10" width="8" height="1" fill="#9a9a9a"/><rect x="16" y="467.86" width="4" height="1" fill="#9a9a9a"/><rect x="16" y="455.62" width="4" height="1" fill="#9a9a9a"/><rect x="16" y="443.38" width="4" height="1" fill="#9a9a9a"/><rect x="16" y="431.14" width="4" height="1" fill="#9a9a9a"/><rect x="12" y="418.90" width="8" height="1" fill="#9a9a9a"/><rect x="16" y="406.66" width="4" height="1" fill="#9a9a9a"/><rect x="16" y="394.42" width="4" height="1" fill="#9a9a9a"/><rect x="16" y="382.18" width="4" height="1" fill="#9a9a9a"/><rect x="16" y="369.94" width="4" height="1" fill="#9a9a9a"/><rect x="12" y="357.70" width="8" height="1" fill="#9a9a9a"/><rect x="16" y="345.46" width="4" height="1" fill="#9a9a9a"/><rect x="16" y="333.22" width="4" height="1" fill="#9a9a9a"/><rect x="16" y="320.98" width="4" height="1" fill="#9a9a9a"/><rect x="16" y="308.74" width="4" height="1" fill="#9a9a9a"/><rect x="12" y="296.50" width="8" height="1" fill="#9a9a9a"/><rect x="16" y="284.26" width="4" height="1" fill="#9a9a9a"/><rect x="16" y="272.02" width="4" height="1" fill="#9a9a9a"/><rect x="16" y="259.78" width="4" height="1" fill="#9a9a9a"/><rect x="16" y="247.54" width="4" height="1" fill="#9a9a9a"/><rect x="12" y="235.30" width="8" height="1" fill="#9a9a9a"/><rect x="16" y="223.06" width="4" height="1" fill="#9a9a9a"/><rect x="16" y="210.82" width="4" height="1" fill="#9a9a9a"/><rect x="16" y="198.58" width="4" height="1" fill="#9a9a9a"/><rect x="16" y="186.34" width="4" height="1" fill="#9a9a9a"/><rect x="12" y="174.10" width="8" height="1" fill="#9a9a9a"/><rect x="16" y="161.86" width="4" height="1" fill="#9a9a9a"/><rect x="16" y="149.62" width="4" height="1" fill="#9a9a9a"/><rect x="16" y="137.38" width="4" height="1" fill="#9a9a9a"/></svg>
<div class="t" style="left:508px;top:534.8px;width:60px;text-align:center;font-size:10px;color:#c4c4c4;transform:rotate(-90deg)">-450</div>
<div class="t" style="left:508px;top:473.6px;width:60px;text-align:center;font-size:10px;color:#c4c4c4;transform:rotate(-90deg)">-300</div>
<div class="t" style="left:508px;top:412.4px;width:60px;text-align:center;font-size:10px;color:#c4c4c4;transform:rotate(-90deg)">-150</div>
<div class="t" style="left:508px;top:351.2px;width:60px;text-align:center;font-size:10px;color:#c4c4c4;transform:rotate(-90deg)">0</div>
<div class="t" style="left:508px;top:290.0px;width:60px;text-align:center;font-size:10px;color:#c4c4c4;transform:rotate(-90deg)">150</div>
<div class="t" style="left:508px;top:228.8px;width:60px;text-align:center;font-size:10px;color:#c4c4c4;transform:rotate(-90deg)">300</div>
<div class="t" style="left:508px;top:167.6px;width:60px;text-align:center;font-size:10px;color:#c4c4c4;transform:rotate(-90deg)">450</div>
<div class="a" style="left:550px;top:127px;width:1037px;height:464px;background:#000"></div>
<div class="a" style="left:677px;top:139px;width:782px;height:440px;background:#fff"></div>
<div class="a" style="left:803.8px;top:330.2px;font-size:50px;font-weight:bold;color:#666;-webkit-text-stroke:1px #666;white-space:nowrap;line-height:50px;transform-origin:0 0;transform:scaleX(1.087)">Cavalry</div>
<div class="a" style="left:1014.2px;top:330.2px;font-size:50px;font-weight:bold;color:#666;-webkit-text-stroke:1px #666;white-space:nowrap;line-height:50px;transform-origin:0 0;transform:scaleX(1.115)">Typing</div>
<div class="a" style="left:1207.8px;top:330.2px;font-size:50px;font-weight:bold;color:#666;-webkit-text-stroke:1px #666;white-space:nowrap;line-height:50px;transform-origin:0 0;transform:scaleX(1.12)">Text</div>
<div class="a" style="left:1322px;top:331px;width:8px;height:47px;background:#666"></div>
<div class="a" style="left:1068px;top:370px;width:195px;height:162px;background:transparent;border:1.2px solid #3cc878"></div>
<div class="a" style="left:1065px;top:367px;width:7px;height:7px;background:#fff;border:1px solid #3cc878"></div>
<div class="a" style="left:1259px;top:367px;width:7px;height:7px;background:#fff;border:1px solid #3cc878"></div>
<div class="a" style="left:1065px;top:529px;width:7px;height:7px;background:#fff;border:1px solid #3cc878"></div>
<div class="a" style="left:1259px;top:529px;width:7px;height:7px;background:#fff;border:1px solid #3cc878"></div>
<div class="a" style="left:1072px;top:367px;width:8px;height:47px;background:transparent;border:1px solid #7485c8"></div>
<div class="a" style="left:1068px;top:355px;width:9px;height:9px;background:#b08cf8"></div>
<svg style="left:1063px;top:355px" width="9" height="9" viewBox="0 0 9 9"><circle cx="4.5" cy="4.5" r="3.5" fill="none" stroke="#444" stroke-width="1.2"/></svg>
<div class="t" style="left:1081px;top:353px;color:#111;font-size:11.5px;letter-spacing:0.321px;text-shadow:0 0 1px #fff,0 0 1px #fff,0 0 2px #fff">Cavalry Typing Text</div>
<div class="t" style="left:569px;top:494px;font-size:12px;color:#f0f0f0;letter-spacing:-0.15px">Hold S <span style="color:rgba(150,150,150,0.53)">Direct Layer Selection</span></div>
<div class="t" style="left:569px;top:508px;font-size:12px;color:#f0f0f0;letter-spacing:-0.15px">Space <span style="color:rgba(150,150,150,0.53)">Play/ Stop</span></div>
<div class="t" style="left:569px;top:522px;font-size:12px;color:#f0f0f0;letter-spacing:-0.15px">Space + click + drag <span style="color:rgba(150,150,150,0.53)">Pan</span></div>
<div class="t" style="left:569px;top:536px;font-size:12px;color:#f0f0f0;letter-spacing:-0.15px">Alt + click + drag <span style="color:rgba(150,150,150,0.53)">Move Pivot Point</span></div>
<div class="t" style="left:569px;top:550px;font-size:12px;color:#f0f0f0;letter-spacing:-0.15px">Shift <span style="color:rgba(150,150,150,0.53)">Enable Snapping</span></div>
<div class="t" style="left:998px;top:571px;color:#111;font-size:12px;text-shadow:0 0 1px #fff,0 0 1px #fff,0 0 2px #fff">Viewport Quality: High</div>
<div class="a" style="left:535px;top:594px;width:78px;height:16px;background:#2a2a2a;border-radius:3px"></div>
<div class="t" style="left:538px;top:596px;color:#e6e6e6">41%</div>
<svg style="left:598px;top:600px" width="9" height="5" viewBox="0 0 9 5"><path d="M0.5 0.5L4.5 4.5L8.5 0.5" stroke="#bbb" stroke-width="1" fill="none"/></svg>
<div class="a" style="left:866px;top:593px;width:100px;height:19px;background:#2c2c2c;border:1px solid #1e1e1e;border-radius:4px"></div>
<div class="a" style="left:886px;top:594px;width:1px;height:17px;background:#1e1e1e"></div>
<div class="a" style="left:906px;top:594px;width:1px;height:17px;background:#1e1e1e"></div>
<div class="a" style="left:926px;top:594px;width:1px;height:17px;background:#1e1e1e"></div>
<div class="a" style="left:946px;top:594px;width:1px;height:17px;background:#1e1e1e"></div>
<svg style="left:869px;top:596px" width="14" height="13" viewBox="0 0 14 13"><rect x="3" y="2" width="2" height="9" fill="#ccc"/><path d="M11 2V11L5.5 6.5Z" fill="#ccc"/></svg>
<svg style="left:889px;top:596px" width="14" height="13" viewBox="0 0 14 13"><path d="M8 2V11L2.5 6.5Z" fill="#ccc"/><rect x="9" y="2" width="2" height="9" fill="#ccc"/></svg>
<svg style="left:909px;top:596px" width="14" height="13" viewBox="0 0 14 13"><path d="M3.5 2V11L10.5 6.5Z" fill="#ccc"/></svg>
<svg style="left:929px;top:596px" width="14" height="13" viewBox="0 0 14 13"><rect x="3" y="2" width="2" height="9" fill="#ccc"/><path d="M6 2V11L11.5 6.5Z" fill="#ccc"/></svg>
<svg style="left:949px;top:596px" width="14" height="13" viewBox="0 0 14 13"><path d="M3 2V11L8.5 6.5Z" fill="#ccc"/><rect x="9" y="2" width="2" height="9" fill="#ccc"/></svg>
<div class="a" style="left:971px;top:593px;width:19px;height:19px;background:#2c2c2c;border:1px solid #1e1e1e;border-radius:4px"></div>
<svg style="left:974px;top:597px" width="13" height="11" viewBox="0 0 13 11"><path d="M3.5 3.5H0.5V10.5H12.5V3.5H9" fill="none" stroke="#ccc" stroke-width="1.2"/><path d="M4 7Q5 3 9 3" stroke="#ccc" stroke-width="1.2" fill="none"/><path d="M8 0.5L11 3L8 5.5Z" fill="#ccc"/></svg>
<div class="a" style="left:1232px;top:593px;width:37px;height:19px;background:#2c2c2c;border:1px solid #1e1e1e;border-radius:4px"></div>
<svg style="left:1234px;top:598px" width="15" height="9" viewBox="0 0 15 9"><path d="M4 0.5H14.5V8.5H4L0.5 4.5Z" fill="#ddd"/><circle cx="5" cy="4.5" r="1.4" fill="#333"/></svg>
<div class="t" style="left:1257px;top:596px;color:#b8b8b8;font-size:12px">0</div>
<div class="a" style="left:1272px;top:593px;width:33px;height:19px;background:#2c2c2c;border:1px solid #1e1e1e;border-radius:4px"></div>
<div class="a" style="left:1291px;top:594px;width:1px;height:17px;background:#1e1e1e"></div>
<svg style="left:1276px;top:596px" width="15" height="13" viewBox="0 0 15 13"><path d="M0 4H3L7 0.5V12.5L3 9H0Z" fill="#2ecc71"/><path d="M9 3.5Q11 6.5 9 9.5M11 1.5Q14.5 6.5 11 11.5" stroke="#2ecc71" stroke-width="1.3" fill="none"/></svg>
<svg style="left:1294px;top:598px" width="7" height="9" viewBox="0 0 7 9"><path d="M0.5 0.5L6 4.5L0.5 8.5Z" fill="none" stroke="#aaa" stroke-width="0.9"/></svg>
<div class="a" style="left:1307px;top:593px;width:33px;height:19px;background:#2c2c2c;border:1px solid #1e1e1e;border-radius:4px"></div>
<div class="a" style="left:1326px;top:594px;width:1px;height:17px;background:#1e1e1e"></div>
<svg style="left:1310px;top:596px;transform:rotate(-45deg)" width="13" height="13" viewBox="0 0 13 13"><path d="M2.5 11.5L2 6.5A4.5 4.5 0 0 1 11 6.5L10.5 11.5" stroke="#ddd" stroke-width="2.2" fill="none"/></svg>
<svg style="left:1329px;top:598px" width="7" height="9" viewBox="0 0 7 9"><path d="M0.5 0.5L6 4.5L0.5 8.5Z" fill="none" stroke="#aaa" stroke-width="0.9"/></svg>
<div class="a" style="left:1343px;top:593px;width:32px;height:19px;background:#2c2c2c;border:1px solid #1e1e1e;border-radius:4px"></div>
<div class="a" style="left:1361px;top:594px;width:1px;height:17px;background:#1e1e1e"></div>
<svg style="left:1345px;top:595px" width="14" height="14" viewBox="0 0 14 14"><path d="M4.5 0V14M9.5 0V14M0 4.5H14M0 9.5H14" stroke="#ddd" stroke-width="1.1"/></svg>
<svg style="left:1364px;top:598px" width="7" height="9" viewBox="0 0 7 9"><path d="M0.5 0.5L6 4.5L0.5 8.5Z" fill="none" stroke="#aaa" stroke-width="0.9"/></svg>
<div class="a" style="left:1377px;top:593px;width:20px;height:19px;background:#2c2c2c;border:1px solid #1e1e1e;border-radius:4px"></div>
<svg style="left:1379px;top:596px" width="16" height="13" viewBox="0 0 16 13"><rect x="0" y="0" width="3" height="3" fill="#2ecc71"/><rect x="0" y="5" width="3" height="8" fill="#2ecc71"/><rect x="5.5" y="0.5" width="10" height="6" fill="none" stroke="#2ecc71" stroke-width="1.2"/><rect x="5" y="8" width="11" height="5" fill="#2ecc71"/></svg>
<div class="a" style="left:1400px;top:593px;width:20px;height:19px;background:#2c2c2c;border:1px solid #1e1e1e;border-radius:4px"></div>
<svg style="left:1402px;top:598px" width="16" height="9" viewBox="0 0 16 9"><path d="M0.5 0.5L4.5 4.5L0.5 8.5M5.5 0.5L9.5 4.5L5.5 8.5M10.5 0.5L14.5 4.5L10.5 8.5" stroke="#ccc" stroke-width="1.8" fill="none"/></svg>
<div class="a" style="left:1423px;top:593px;width:33px;height:19px;background:#2c2c2c;border:1px solid #1e1e1e;border-radius:4px"></div>
<div class="a" style="left:1443px;top:594px;width:1px;height:17px;background:#1e1e1e"></div>
<svg style="left:1426px;top:596px" width="15" height="13" viewBox="0 0 15 13"><rect x="0.5" y="0.5" width="14" height="10" fill="none" stroke="#ccc" stroke-width="1.1"/><rect x="0" y="11" width="15" height="2" fill="#aaa"/></svg>
<svg style="left:1446px;top:598px" width="7" height="9" viewBox="0 0 7 9"><path d="M0.5 0.5L6 4.5L0.5 8.5Z" fill="none" stroke="#aaa" stroke-width="0.9"/></svg>
<div class="a" style="left:1458px;top:593px;width:33px;height:19px;background:#2c2c2c;border:1px solid #1e1e1e;border-radius:4px"></div>
<div class="a" style="left:1477px;top:594px;width:1px;height:17px;background:#1e1e1e"></div>
<svg style="left:1461px;top:596px" width="14" height="13" viewBox="0 0 14 13"><rect x="0.5" y="0.5" width="8" height="6" fill="none" stroke="#bbb"/><path d="M2.5 8.5H10.5V2.5M4.5 10.5H12.5V4.5M6.5 12.5H14.5V6.5" fill="none" stroke="#999"/></svg>
<svg style="left:1481px;top:598px" width="7" height="9" viewBox="0 0 7 9"><path d="M0.5 0.5L6 4.5L0.5 8.5Z" fill="none" stroke="#aaa" stroke-width="0.9"/></svg>
<div class="a" style="left:1493px;top:593px;width:32px;height:19px;background:#2c2c2c;border:1px solid #1e1e1e;border-radius:4px"></div>
<div class="a" style="left:1512px;top:594px;width:1px;height:17px;background:#1e1e1e"></div>
<svg style="left:1496px;top:595px" width="14" height="14" viewBox="0 0 14 14"><rect x="0" y="0" width="8" height="8" fill="#bbb"/><rect x="4.5" y="5.5" width="9" height="8" fill="#2c2c2c" stroke="#ddd" stroke-width="1.1"/></svg>
<svg style="left:1516px;top:598px" width="7" height="9" viewBox="0 0 7 9"><path d="M0.5 0.5L6 4.5L0.5 8.5Z" fill="none" stroke="#aaa" stroke-width="0.9"/></svg>
<div class="a" style="left:1528px;top:593px;width:32px;height:19px;background:#2c2c2c;border:1px solid #1e1e1e;border-radius:4px"></div>
<div class="a" style="left:1547px;top:594px;width:1px;height:17px;background:#1e1e1e"></div>
<svg style="left:1531px;top:595px" width="15" height="15" viewBox="0 0 15 15"><rect x="0" y="0" width="3" height="3" fill="#2ecc71"/><rect x="0" y="6" width="3" height="3" fill="#2ecc71"/><rect x="0" y="12" width="3" height="3" fill="#2ecc71"/><rect x="3" y="3" width="3" height="3" fill="#2ecc71"/><rect x="3" y="9" width="3" height="3" fill="#2ecc71"/><rect x="6" y="0" width="3" height="3" fill="#2ecc71"/><rect x="6" y="6" width="3" height="3" fill="#2ecc71"/><rect x="6" y="12" width="3" height="3" fill="#2ecc71"/><rect x="9" y="3" width="3" height="3" fill="#2ecc71"/><rect x="9" y="9" width="3" height="3" fill="#2ecc71"/><rect x="12" y="0" width="3" height="3" fill="#2ecc71"/><rect x="12" y="6" width="3" height="3" fill="#2ecc71"/><rect x="12" y="12" width="3" height="3" fill="#2ecc71"/></svg>
<svg style="left:1551px;top:598px" width="7" height="9" viewBox="0 0 7 9"><path d="M0.5 0.5L6 4.5L0.5 8.5Z" fill="none" stroke="#aaa" stroke-width="0.9"/></svg>
<div class="a" style="left:1563px;top:593px;width:21px;height:19px;background:#2c2c2c;border:1px solid #1e1e1e;border-radius:4px"></div>
<svg style="left:1566px;top:596px" width="15" height="15" viewBox="0 0 15 15"><circle cx="7.5" cy="7.5" r="5" fill="#ddd"/><path d="M7.5 0V15M0 7.5H15M2.2 2.2L12.8 12.8M12.8 2.2L2.2 12.8" stroke="#ddd" stroke-width="2.6"/><circle cx="7.5" cy="7.5" r="2.3" fill="#2c2c2c"/></svg>
<!-- p4 -->
<div class="a" style="left:1593px;top:85px;width:321px;height:22px;background:#1e1e1e"></div>
<div class="a" style="left:1593px;top:85px;width:39px;height:22px;background:#444;border-radius:4px 4px 0 0"></div>
<div class="t" style="left:1598px;top:90px;color:#e0e0e0">Color</div>
<div class="a" style="left:1634px;top:85px;width:70px;height:22px;background:#262626;border-radius:4px 4px 0 0"></div>
<div class="t" style="left:1639px;top:90px;color:#e0e0e0">Add Layers</div>
<div class="a" style="left:1593px;top:107px;width:321px;height:409px;background:#444"></div>
<div class="a" style="left:1900px;top:107px;width:14px;height:409px;background:#2a2a2a"></div>
<div class="a" style="left:1902px;top:108px;width:10px;height:357px;background:#505050;border-radius:5px"></div>
<div class="a" style="left:1646px;top:120px;width:200px;height:200px;background:conic-gradient(#80ff00 0deg,#ffff00 42deg,#ff0000 90deg,#ff00ff 139deg,#0000ff 210deg,#00ffff 276deg,#00ff00 329deg,#80ff00 360deg);border-radius:50%;-webkit-mask:radial-gradient(circle,transparent 74.5px,#000 75.5px,#000 99.5px,transparent 100.5px);mask:radial-gradient(circle,transparent 74.5px,#000 75.5px,#000 99.5px,transparent 100.5px)"></div>
<div class="a" style="left:1702px;top:176px;width:90px;height:90px;background:linear-gradient(to right,#000,rgba(0,0,0,0)),linear-gradient(to bottom,#fff,#f00)"></div>
<svg style="left:1739px;top:170px" width="12" height="12" viewBox="0 0 12 12"><circle cx="6" cy="6" r="5.5" fill="none" stroke="#ddd" stroke-width="1.1"/></svg>
<svg style="left:1827px;top:214px" width="12" height="12" viewBox="0 0 12 12"><circle cx="6" cy="6" r="5.5" fill="none" stroke="#fff" stroke-width="1.1"/></svg>
<div class="a" style="left:1600px;top:333px;width:22px;height:22px;background:#7a7a7a;border-radius:3px"></div>
<div class="t" style="left:1625px;top:338px;color:#e6e6e6">Gray</div>
<div class="a" style="left:1871px;top:333px;width:22px;height:22px;background:#2a2a2a;border:1px solid #222;border-radius:4px"></div>
<svg style="left:1876px;top:338px" width="13" height="13" viewBox="0 0 13 13"><path d="M1 12L2 9L8 3L10 5L4 11Z" fill="none" stroke="#ddd" stroke-width="1"/><path d="M9 1L12 4L10.5 5.5L7.5 2.5Z" fill="#ddd" stroke="#ddd"/></svg>
<div class="a" style="left:1600px;top:360px;width:49px;height:18px;background:#3a3a3a;border:1px solid #2a2a2a;border-radius:3px"></div>
<div class="t" style="left:1603px;top:363px;color:#e6e6e6">Hex</div>
<svg style="left:1636px;top:367px" width="9" height="5" viewBox="0 0 9 5"><path d="M0.5 0.5L4.5 4.5L8.5 0.5" stroke="#bbb" stroke-width="1" fill="none"/></svg>
<div class="a" style="left:1653px;top:358px;width:240px;height:22px;background:#2a2a2a;border-radius:3px"></div>
<div class="t" style="left:1658px;top:363px;color:#555;font-size:10px">#</div>
<div class="t" style="left:1670px;top:363px;color:#e6e6e6">7a7a7a</div>
<div class="a" style="left:1600px;top:390px;width:238px;height:4px;background:#e8e8e8;border-radius:2px"></div>
<svg style="left:1828px;top:386px" width="12" height="12" viewBox="0 0 12 12"><circle cx="6" cy="6" r="5" fill="#6dbf9d" stroke="#4a9a7a" stroke-width="0.8"/><circle cx="6" cy="6" r="2" fill="#5aa888"/></svg>
<div class="a" style="left:1849px;top:384px;width:44px;height:16px;background:#3a3a3a;border-radius:3px"></div>
<div class="t" style="left:1853px;top:386px;color:#555;font-size:11px">A</div>
<div class="t" style="left:1865px;top:386px;color:#e6e6e6">255</div>
<div class="a" style="left:1597px;top:406px;width:299px;height:22px;background:#2a2a2a"></div>
<div class="a" style="left:1599px;top:408px;width:148px;height:20px;background:#444;border-radius:4px 4px 0 0"></div>
<div class="t" style="left:1648px;top:411px;color:#e6e6e6">Swatches</div>
<div class="t" style="left:1793px;top:411px;color:#c8c8c8">Generator</div>
<div class="a" style="left:1597px;top:428px;width:299px;height:88px;background:#444"></div>
<div class="a" style="left:1598px;top:431px;width:257px;height:19px;background:#505050;border-radius:4px"></div>
<div class="a" style="left:1600px;top:432px;width:61px;height:17px;background:#2a2a2a;border-radius:3px"></div>
<svg style="left:1604px;top:435px" width="12" height="11" viewBox="0 0 12 11"><path d="M1 0V11M4 0V11M7 0L11 11" stroke="#2ecc71" stroke-width="1.6"/></svg>
<div class="t" style="left:1621px;top:435px;color:#e6e6e6">Library</div>
<svg style="left:1671px;top:435px" width="11" height="10" viewBox="0 0 11 10"><rect x="0" y="0" width="11" height="10" fill="#ddd"/><rect x="1.5" y="4" width="8" height="5" fill="#505050"/><rect x="2.5" y="5" width="2" height="1" fill="#ddd"/><rect x="5.5" y="5" width="3" height="1" fill="#ddd"/><rect x="2.5" y="7" width="2" height="1" fill="#ddd"/><rect x="5.5" y="7" width="3" height="1" fill="#ddd"/></svg>
<div class="t" style="left:1686px;top:435px;color:#e6e6e6">Project</div>
<svg style="left:1741px;top:434px" width="9" height="12" viewBox="0 0 9 12"><path d="M0.5 0.5H5.5L8.5 3.5V11.5H0.5Z" fill="none" stroke="#ddd" stroke-width="1"/></svg>
<div class="t" style="left:1757px;top:435px;color:#e6e6e6">Scene</div>
<svg style="left:1801px;top:434px" width="11" height="12" viewBox="0 0 11 12"><path d="M0.5 0.5H10.5V7L6.5 11.5H0.5Z" fill="none" stroke="#ddd" stroke-width="1"/><path d="M5.5 11V6.5H10" fill="none" stroke="#ddd" stroke-width="1"/></svg>
<div class="t" style="left:1815px;top:435px;color:#e6e6e6">Labels</div>
<div class="a" style="left:1858px;top:431px;width:38px;height:19px;background:#505050;border-radius:4px"></div>
<div class="a" style="left:1859px;top:432px;width:18px;height:17px;background:#2a2a2a;border-radius:3px"></div>
<svg style="left:1862px;top:435px" width="11" height="11" viewBox="0 0 11 11"><rect x="1" y="1" width="3.5" height="3.5" fill="#2ecc71"/><rect x="6.5" y="1" width="3.5" height="3.5" fill="#2ecc71"/><rect x="1" y="6.5" width="3.5" height="3.5" fill="#2ecc71"/><rect x="6.5" y="6.5" width="3.5" height="3.5" fill="#2ecc71"/></svg>
<svg style="left:1881px;top:436px" width="11" height="10" viewBox="0 0 11 10"><rect x="0" y="0" width="11" height="1.3" fill="#ddd"/><rect x="0" y="4" width="11" height="1.3" fill="#ddd"/><rect x="0" y="8" width="11" height="1.3" fill="#ddd"/></svg>
<div class="a" style="left:1599px;top:453px;width:275px;height:18px;background:#474747;border:1px solid #303030;border-radius:3px"></div>
<div class="t" style="left:1601px;top:456px;color:#e6e6e6">Bright</div>
<svg style="left:1861px;top:460px" width="9" height="5" viewBox="0 0 9 5"><path d="M0.5 0.5L4.5 4.5L8.5 0.5" stroke="#bbb" stroke-width="1" fill="none"/></svg>
<div class="a" style="left:1882px;top:461px;width:2px;height:2px;background:#ccc"></div>
<div class="a" style="left:1887px;top:461px;width:2px;height:2px;background:#ccc"></div>
<div class="a" style="left:1892px;top:461px;width:2px;height:2px;background:#ccc"></div>
<div class="a" style="left:1598px;top:470px;width:297px;height:46px;background:#2a2a2a"></div>
<div class="a" style="left:1600px;top:472px;width:18px;height:18px;background:#a864c8;border-radius:3px"></div>
<div class="a" style="left:1622px;top:472px;width:18px;height:18px;background:#0cc8ee;border-radius:3px"></div>
<div class="a" style="left:1644px;top:472px;width:18px;height:18px;background:#f2dc02;border-radius:3px"></div>
<div class="a" style="left:1666px;top:472px;width:18px;height:18px;background:#f27800;border-radius:3px"></div>
<div class="a" style="left:1688px;top:472px;width:18px;height:18px;background:#ee0a0a;border-radius:3px"></div>
<div class="a" style="left:1593px;top:516px;width:321px;height:7px;background:#141414"></div>
<div class="a" style="left:1593px;top:523px;width:321px;height:22px;background:#1e1e1e"></div>
<div class="a" style="left:1593px;top:523px;width:38px;height:22px;background:#444;border-radius:4px 4px 0 0"></div>
<div class="t" style="left:1598px;top:528px;color:#e0e0e0">Align</div>
<div class="a" style="left:1593px;top:545px;width:321px;height:67px;background:#444"></div>
<div class="t" style="left:1601px;top:558px;color:#e6e6e6">Alignment</div>
<div class="t" style="left:1601px;top:586px;color:#e6e6e6">Distribution</div>
<div class="a" style="left:1791px;top:556px;width:55px;height:17px;background:#2a2a2a;border:1px solid #1e1e1e;border-radius:4px"></div>
<div class="a" style="left:1809px;top:557px;width:1px;height:15px;background:#1e1e1e"></div>
<div class="a" style="left:1827px;top:557px;width:1px;height:15px;background:#1e1e1e"></div>
<svg style="left:1794px;top:559px" width="12" height="11" viewBox="0 0 12 11"><rect x="1" y="0" width="1" height="11" fill="#ddd"/><rect x="3" y="2" width="5" height="2" fill="#ddd"/><rect x="3" y="7" width="8" height="2" fill="#ddd"/></svg>
<svg style="left:1812px;top:559px" width="12" height="11" viewBox="0 0 12 11"><rect x="5.5" y="0" width="1" height="11" fill="#ddd"/><rect x="3" y="2" width="6" height="2" fill="#ddd"/><rect x="1" y="7" width="10" height="2" fill="#ddd"/></svg>
<svg style="left:1830px;top:559px" width="12" height="11" viewBox="0 0 12 11"><rect x="10" y="0" width="1" height="11" fill="#ddd"/><rect x="4" y="2" width="5" height="2" fill="#ddd"/><rect x="1" y="7" width="8" height="2" fill="#ddd"/></svg>
<div class="a" style="left:1852px;top:556px;width:55px;height:17px;background:#2a2a2a;border:1px solid #1e1e1e;border-radius:4px"></div>
<div class="a" style="left:1870px;top:557px;width:1px;height:15px;background:#1e1e1e"></div>
<div class="a" style="left:1888px;top:557px;width:1px;height:15px;background:#1e1e1e"></div>
<svg style="left:1855px;top:559px" width="12" height="11" viewBox="0 0 12 11"><rect x="0" y="1" width="11" height="1" fill="#ddd"/><rect x="2" y="3" width="2" height="8" fill="#ddd"/><rect x="7" y="3" width="2" height="5" fill="#ddd"/></svg>
<svg style="left:1873px;top:559px" width="12" height="11" viewBox="0 0 12 11"><rect x="0" y="5" width="11" height="1" fill="#ddd"/><rect x="2" y="1" width="2" height="9" fill="#ddd"/><rect x="7" y="2" width="2" height="7" fill="#ddd"/></svg>
<svg style="left:1891px;top:559px" width="12" height="11" viewBox="0 0 12 11"><rect x="0" y="10" width="11" height="1" fill="#ddd"/><rect x="2" y="5" width="2" height="5" fill="#ddd"/><rect x="7" y="1" width="2" height="9" fill="#ddd"/></svg>
<div class="a" style="left:1791px;top:584px;width:55px;height:17px;background:#2a2a2a;border:1px solid #1e1e1e;border-radius:4px"></div>
<div class="a" style="left:1809px;top:585px;width:1px;height:15px;background:#1e1e1e"></div>
<div class="a" style="left:1827px;top:585px;width:1px;height:15px;background:#1e1e1e"></div>
<svg style="left:1794px;top:587px" width="12" height="11" viewBox="0 0 12 11"><rect x="1" y="0" width="1" height="11" fill="#ddd"/><rect x="5" y="1" width="2" height="9" fill="#ddd"/><rect x="10" y="0" width="1" height="11" fill="#ddd"/></svg>
<svg style="left:1812px;top:587px" width="12" height="11" viewBox="0 0 12 11"><rect x="0" y="1" width="11" height="1" fill="#ddd"/><rect x="1" y="5" width="9" height="2" fill="#ddd"/><rect x="0" y="10" width="11" height="1" fill="#ddd"/></svg>
<svg style="left:1830px;top:587px" width="12" height="11" viewBox="0 0 12 11"><rect x="0" y="8" width="2" height="2" fill="#ddd"/><rect x="4" y="5" width="2" height="2" fill="#ddd"/><rect x="8" y="2" width="2" height="2" fill="#ddd"/><path d="M0.5 10.5V0.5H10.5" stroke="#ddd" stroke-dasharray="1 1" fill="none"/></svg>
<!-- p5 -->
<div class="a" style="left:494px;top:619px;width:1420px;height:22px;background:#1e1e1e"></div>
<div class="a" style="left:494px;top:619px;width:89px;height:22px;background:#444;border-radius:4px 4px 0 0"></div>
<div class="t" style="left:499px;top:624px;color:#e6e6e6;letter-spacing:-0.169px">Scene Window</div>
<div class="a" style="left:584px;top:619px;width:103px;height:22px;background:#262626;border-radius:4px 4px 0 0"></div>
<div class="t" style="left:589px;top:624px;color:#e0e0e0;letter-spacing:-0.099px">JavaScript Editor</div>
<div class="a" style="left:688px;top:619px;width:109px;height:22px;background:#262626;border-radius:4px 4px 0 0"></div>
<div class="t" style="left:690px;top:624px;color:#e0e0e0;letter-spacing:-0.190px">Dependency Graph</div>
<div class="a" style="left:494px;top:641px;width:1420px;height:357px;background:#2a2a2a"></div>
<div class="a" style="left:494px;top:641px;width:1420px;height:22px;background:#262626"></div>
<div class="t" style="left:665px;top:646px;color:#bdbdbd;letter-spacing:-0.119px">Jumping Text Coloring</div>
<svg style="left:951px;top:648px" width="9" height="9" viewBox="0 0 9 9"><path d="M0.5 0.5L8.5 8.5M8.5 0.5L0.5 8.5" stroke="#999" stroke-width="1"/></svg>
<div class="a" style="left:969px;top:646px;width:1px;height:12px;background:#999"></div>
<div class="t" style="left:1156px;top:646px;color:#bdbdbd">Typing Text 01</div>
<svg style="left:1422px;top:648px" width="9" height="9" viewBox="0 0 9 9"><path d="M0.5 0.5L8.5 8.5M8.5 0.5L0.5 8.5" stroke="#999" stroke-width="1"/></svg>
<div class="a" style="left:1439px;top:643px;width:470px;height:20px;background:#404040;border-radius:4px 4px 0 0"></div>
<div class="t" style="left:1629px;top:646px;color:#e6e6e6">Typing Text 2</div>
<svg style="left:1892px;top:648px" width="9" height="9" viewBox="0 0 9 9"><path d="M0.5 0.5L8.5 8.5M8.5 0.5L0.5 8.5" stroke="#999" stroke-width="1"/></svg>
<div class="a" style="left:950px;top:663px;width:9px;height:335px;background:#232323"></div>
<div class="a" style="left:954px;top:828px;width:2px;height:2px;background:#777"></div>
<div class="a" style="left:954px;top:832px;width:2px;height:2px;background:#777"></div>
<div class="a" style="left:954px;top:836px;width:2px;height:2px;background:#777"></div>
<div class="a" style="left:494px;top:663px;width:456px;height:26px;background:#3a3a3a"></div>
<div class="a" style="left:497px;top:665px;width:247px;height:21px;background:#262626;border-radius:10px"></div>
<svg style="left:500px;top:668px" width="14" height="14" viewBox="0 0 14 14"><circle cx="5.5" cy="5.5" r="4.3" stroke="#cfcfcf" stroke-width="1.3" fill="none"/><path d="M8.6 8.6L12 12" stroke="#cfcfcf" stroke-width="2"/></svg>
<div class="t" style="left:520px;top:669px;color:#8c8c8c;letter-spacing:-0.242px">Enter a layer name</div>
<div class="a" style="left:746px;top:666px;width:19px;height:19px;background:#2a2a2a;border:1px solid #1e1e1e;border-radius:4px"></div>
<svg style="left:749px;top:669px" width="13" height="13" viewBox="0 0 13 13"><path d="M6.5 1V12M1 6.5H12" stroke="#eee" stroke-width="2"/><path d="M13 11L11 13H13Z" fill="#2ecc71"/></svg>
<div class="a" style="left:791px;top:665px;width:19px;height:20px;background:#2a2a2a;border:1px solid #1e1e1e;border-radius:4px"></div>
<svg style="left:793px;top:667px" width="15" height="15" viewBox="0 0 15 15"><circle cx="9.5" cy="5.5" r="4.5" fill="#ddd"/><path d="M2 12A6 6 0 0 1 5 5" stroke="#666" stroke-width="1.5" fill="none"/><path d="M4 13A6 6 0 0 1 6 8" stroke="#555" stroke-width="1.5" fill="none"/></svg>
<div class="a" style="left:813px;top:665px;width:19px;height:20px;background:#2a2a2a;border:1px solid #1e1e1e;border-radius:4px"></div>
<svg style="left:815px;top:668px" width="14" height="14" viewBox="0 0 14 14"><circle cx="2.5" cy="2.5" r="1.2" fill="#ddd"/><circle cx="9" cy="2" r="1.2" fill="#ddd"/><circle cx="2" cy="8" r="1.2" fill="#ddd"/><path d="M8.5 5L9.3 8L12 8.7L9.3 9.5L8.5 12.5L7.7 9.5L5 8.7L7.7 8Z" fill="#eee"/><path d="M14 12L12 14H14Z" fill="#2ecc71"/></svg>
<div class="a" style="left:835px;top:665px;width:19px;height:20px;background:#2a2a2a;border:1px solid #1e1e1e;border-radius:4px"></div>
<svg style="left:837px;top:668px" width="14" height="14" viewBox="0 0 14 14"><path d="M1 2.5H13M1 7H13M1 11.5H13" stroke="#ddd" stroke-width="1"/><circle cx="8" cy="2.5" r="1.8" fill="#2a2a2a" stroke="#ddd"/><circle cx="5" cy="7" r="1.8" fill="#2a2a2a" stroke="#ddd"/><circle cx="9" cy="11.5" r="1.8" fill="#2a2a2a" stroke="#ddd"/><path d="M14 12L12 14H14Z" fill="#2ecc71"/></svg>
<div class="a" style="left:855px;top:661px;width:100px;height:28px;background:#262626;border:3px solid #b3e21e"></div>
<div class="t" style="left:862px;top:669px;color:#555">F</div>
<div class="t" style="left:873px;top:669px;color:#e6e6e6">60</div>
<div class="a" style="left:494px;top:689px;width:458px;height:16px;background:#444"></div>
<svg style="left:500px;top:690px" width="10" height="12" viewBox="0 0 10 12"><path d="M2.5 5V3.5A2.5 2.5 0 0 1 7.5 3.5V5" stroke="#ccc" stroke-width="1.3" fill="none"/><rect x="0.5" y="5" width="9" height="7" fill="#ccc"/><rect x="4" y="8" width="2" height="2" fill="#444"/></svg>
<svg style="left:517px;top:692px" width="14" height="9" viewBox="0 0 14 9"><path d="M0.5 4.5Q7 -2.5 13.5 4.5Q7 11.5 0.5 4.5Z" fill="none" stroke="#bbb" stroke-width="1"/><circle cx="7" cy="4.5" r="2" fill="#bbb"/></svg>
<svg style="left:537px;top:690px" width="13" height="13" viewBox="0 0 13 13"><path d="M6.5 0.5L12.5 3.5V9.5L6.5 12.5L0.5 9.5V3.5Z M0.5 3.5L6.5 6.5L12.5 3.5 M6.5 6.5V12.5" fill="none" stroke="#bbb" stroke-width="1"/></svg>
<svg style="left:555px;top:690px" width="14" height="12" viewBox="0 0 14 12"><path d="M0 4H3L7 0.5V11.5L3 8H0Z" fill="#ccc"/><path d="M9 3.5Q11 6 9 8.5M11 1.5Q14 6 11 10.5" stroke="#ccc" stroke-width="1.1" fill="none"/></svg>
<svg style="left:575px;top:690px" width="12" height="12" viewBox="0 0 12 12"><path d="M1 11L2 8L7 3L9 5L4 10Z" fill="none" stroke="#999" stroke-width="1"/><path d="M8 1L11 4L9.5 5.5L6.5 2.5Z" fill="#ccc" stroke="#ccc"/></svg>
<svg style="left:593px;top:692px" width="15" height="9" viewBox="0 0 15 9"><path d="M4 0.5H14.5V8.5H4L0.5 4.5Z" fill="#d6d6d6"/><circle cx="5.2" cy="4.5" r="1.5" fill="#333"/></svg>
<div class="t" style="left:649px;top:690px;color:#e6e6e6">Name</div>
<div class="a" style="left:494px;top:705px;width:444px;height:110px;background:#363636"></div>
<div class="a" style="left:496px;top:772px;width:440px;height:21px;background:#4a4558;border-radius:3px"></div>
<div class="a" style="left:496px;top:707px;width:18px;height:18px;background:#2a2a2a;border-radius:2px"></div>
<div class="a" style="left:515px;top:707px;width:18px;height:18px;background:#2a2a2a;border-radius:2px"></div>
<div class="a" style="left:534px;top:707px;width:18px;height:18px;background:#2a2a2a;border-radius:2px"></div>
<div class="a" style="left:573px;top:708px;width:16px;height:16px;background:#b88cf8;border-radius:2px;box-shadow:0 1px 1px #111"></div>
<svg style="left:593px;top:712px" width="15" height="9" viewBox="0 0 15 9"><path d="M4 0.5H14.5V8.5H4L0.5 4.5Z" fill="#d6d6d6"/><circle cx="5.2" cy="4.5" r="1.5" fill="#333"/></svg>
<div class="a" style="left:496px;top:729px;width:18px;height:18px;background:#2a2a2a;border-radius:2px"></div>
<div class="a" style="left:515px;top:729px;width:18px;height:18px;background:#2a2a2a;border-radius:2px"></div>
<div class="a" style="left:573px;top:730px;width:16px;height:16px;background:#668ee6;border-radius:2px;box-shadow:0 1px 1px #111"></div>
<svg style="left:593px;top:734px" width="15" height="9" viewBox="0 0 15 9"><path d="M4 0.5H14.5V8.5H4L0.5 4.5Z" fill="#d6d6d6"/><circle cx="5.2" cy="4.5" r="1.5" fill="#333"/></svg>
<div class="a" style="left:496px;top:773px;width:18px;height:18px;background:#2a2a2a;border-radius:2px"></div>
<div class="a" style="left:515px;top:773px;width:18px;height:18px;background:#2a2a2a;border-radius:2px"></div>
<div class="a" style="left:534px;top:773px;width:18px;height:18px;background:#2a2a2a;border-radius:2px"></div>
<div class="a" style="left:573px;top:774px;width:16px;height:16px;background:#b88cf8;border-radius:2px;box-shadow:0 1px 1px #111"></div>
<svg style="left:593px;top:778px" width="15" height="9" viewBox="0 0 15 9"><path d="M4 0.5H14.5V8.5H4L0.5 4.5Z" fill="#d6d6d6"/><circle cx="5.2" cy="4.5" r="1.5" fill="#333"/></svg>
<div class="a" style="left:496px;top:795px;width:18px;height:18px;background:#2a2a2a;border-radius:2px"></div>
<div class="a" style="left:515px;top:795px;width:18px;height:18px;background:#2a2a2a;border-radius:2px"></div>
<div class="a" style="left:534px;top:795px;width:18px;height:18px;background:#2a2a2a;border-radius:2px"></div>
<div class="a" style="left:573px;top:796px;width:16px;height:16px;background:#b88cf8;border-radius:2px;box-shadow:0 1px 1px #111"></div>
<svg style="left:593px;top:800px" width="15" height="9" viewBox="0 0 15 9"><path d="M4 0.5H14.5V8.5H4L0.5 4.5Z" fill="#d6d6d6"/><circle cx="5.2" cy="4.5" r="1.5" fill="#333"/></svg>
<svg style="left:517px;top:712px" width="14" height="9" viewBox="0 0 14 9"><path d="M0.5 4.5Q7 -2.5 13.5 4.5Q7 11.5 0.5 4.5Z" fill="none" stroke="#bbb" stroke-width="1"/><circle cx="7" cy="4.5" r="2" fill="#bbb"/></svg>
<svg style="left:519px;top:732px" width="11" height="11" viewBox="0 0 11 11"><circle cx="5.5" cy="5.5" r="4.8" fill="none" stroke="#ccc" stroke-width="1.1"/><path d="M3 5.5L5 7.5L9.5 2.5" stroke="#ddd" stroke-width="1.4" fill="none"/></svg>
<div class="a" style="left:610px;top:707px;width:32px;height:18px;background:#2e2e2e;border-radius:2px"></div>
<svg style="left:613px;top:714px" width="9" height="5" viewBox="0 0 9 5"><path d="M0.5 0.5L4.5 4.5L8.5 0.5" stroke="#888" stroke-width="1" fill="none"/></svg>
<svg style="left:647px;top:708px" width="16" height="16" viewBox="0 0 16 16"><path d="M3.5 1.5H12.5M3.5 14.5H12.5M1.5 3.5V12.5M14.5 3.5V12.5" stroke="#ddd" stroke-width="1"/><rect x="0" y="0" width="3" height="3" fill="#eee"/><rect x="13" y="0" width="3" height="3" fill="#eee"/><rect x="0" y="13" width="3" height="3" fill="#eee"/><rect x="13" y="13" width="3" height="3" fill="#eee"/><path d="M4.5 4H11.5V6.5H9.3V12H6.7V6.5H4.5Z" fill="#e8d870"/></svg>
<div class="t" style="left:667px;top:710px;color:#e6e6e6">Main</div>
<div class="a" style="left:898px;top:708px;width:21px;height:16px;background:#2a2a2a;border-radius:3px"></div>
<div class="a" style="left:908px;top:708px;width:1px;height:16px;background:#222"></div>
<div class="a" style="left:898px;top:708px;width:11px;height:16px;background:transparent;border:1px solid #b8a060;border-radius:3px 0 0 3px"></div>
<svg style="left:900px;top:712px" width="7" height="8" viewBox="0 0 7 8"><path d="M7 0.5V7.5H3L0 4L3 0.5Z" fill="#d4b878"/></svg>
<svg style="left:910px;top:712px" width="7" height="8" viewBox="0 0 7 8"><path d="M0 0.5V7.5H4L7 4L4 0.5Z" fill="#777"/></svg>
<svg style="left:925px;top:711px" width="10" height="10" viewBox="0 0 10 10"><circle cx="5" cy="5" r="4.2" fill="none" stroke="#777" stroke-width="1.1"/></svg>
<div class="a" style="left:629px;top:729px;width:32px;height:18px;background:#2e2e2e;border-radius:2px"></div>
<svg style="left:633px;top:736px" width="9" height="5" viewBox="0 0 9 5"><path d="M0.5 0.5L4.5 4.5L8.5 0.5" stroke="#888" stroke-width="1" fill="none"/></svg>
<svg style="left:650px;top:735px" width="7" height="7" viewBox="0 0 7 7"><circle cx="3.5" cy="3.5" r="3" fill="#ddd"/></svg>
<svg style="left:667px;top:731px" width="16" height="15" viewBox="0 0 16 15"><path d="M3 4A6.3 6.3 0 0 1 13 4M3 11A6.3 6.3 0 0 0 13 11" stroke="#c8c8c8" stroke-width="1" fill="none"/><path d="M1.2 5.8V9.3H3.7V7.2H1.2M6.3 4.8V9.3H8.8V7.2H6.3M14.5 7.2H11.4V9.3H14.5" stroke="#a8d8f8" stroke-width="1.1" fill="none"/></svg>
<div class="t" style="left:686px;top:732px;color:#e6e6e6;letter-spacing:-0.099px">String Manipulator [Cavalry Typing Te...</div>
<div class="a" style="left:898px;top:730px;width:21px;height:16px;background:#2a2a2a;border-radius:3px"></div>
<div class="a" style="left:908px;top:730px;width:1px;height:16px;background:#222"></div>
<div class="a" style="left:908px;top:730px;width:11px;height:16px;background:transparent;border:1px solid #a050b8;border-radius:0 3px 3px 0"></div>
<svg style="left:900px;top:734px" width="7" height="8" viewBox="0 0 7 8"><path d="M7 0.5V7.5H3L0 4L3 0.5Z" fill="#777"/></svg>
<svg style="left:910px;top:734px" width="7" height="8" viewBox="0 0 7 8"><path d="M0 0.5V7.5H4L7 4L4 0.5Z" fill="#cc55dd"/></svg>
<svg style="left:925px;top:733px" width="10" height="10" viewBox="0 0 10 10"><circle cx="5" cy="5" r="4.2" fill="none" stroke="#777" stroke-width="1.1"/></svg>
<svg style="left:652px;top:749px" width="12" height="12" viewBox="0 0 12 12"><path d="M1 0V9.5H11" stroke="#ccc" stroke-width="1" stroke-dasharray="1 1" fill="none"/></svg>
<div class="t" style="left:666px;top:754px;color:#e6e6e6;letter-spacing:-0.252px">Resize String.Percentage</div>
<div class="a" style="left:828px;top:744px;width:112px;height:31px;background:transparent;border:3px solid #b3e21e"></div>
<div class="a" style="left:840px;top:751px;width:86px;height:17px;background:#262626;border-radius:2px"></div>
<div class="t" style="left:843px;top:754px;color:#666">%</div>
<div class="t" style="left:858px;top:754px;color:#e6e6e6">100.0</div>
<svg style="left:912px;top:755px" width="9" height="9" viewBox="0 0 9 9"><path d="M4.5 0.5L8.5 4.5L4.5 8.5L0.5 4.5Z" fill="#2ecc71"/></svg>
<div class="a" style="left:925px;top:751px;width:10px;height:17px;background:#2a2a2a"></div>
<svg style="left:926px;top:755px" width="7" height="9" viewBox="0 0 7 9"><path d="M0.5 0.5L6 4.5L0.5 8.5Z" fill="#888"/></svg>
<div class="a" style="left:629px;top:773px;width:32px;height:18px;background:#2e2e2e;border-radius:2px"></div>
<svg style="left:633px;top:780px" width="9" height="5" viewBox="0 0 9 5"><path d="M0.5 0.5L4.5 4.5L8.5 0.5" stroke="#888" stroke-width="1" fill="none"/></svg>
<svg style="left:666px;top:774px" width="16" height="16" viewBox="0 0 16 16"><path d="M3.5 1.5H12.5M3.5 14.5H12.5M1.5 3.5V12.5M14.5 3.5V12.5" stroke="#ddd" stroke-width="1"/><rect x="0" y="0" width="3" height="3" fill="#eee"/><rect x="13" y="0" width="3" height="3" fill="#eee"/><rect x="0" y="13" width="3" height="3" fill="#eee"/><rect x="13" y="13" width="3" height="3" fill="#eee"/><path d="M4.5 4H11.5V6.5H9.3V12H6.7V6.5H4.5Z" fill="#e8d870"/></svg>
<div class="t" style="left:686px;top:776px;color:#8c93a8;letter-spacing:-0.119px">Cavalry Typing Text</div>
<div class="a" style="left:898px;top:774px;width:21px;height:16px;background:#2a2a2a;border-radius:3px"></div>
<div class="a" style="left:908px;top:774px;width:1px;height:16px;background:#222"></div>
<svg style="left:900px;top:778px" width="7" height="8" viewBox="0 0 7 8"><path d="M7 0.5V7.5H3L0 4L3 0.5Z" fill="#d4b878"/></svg>
<svg style="left:910px;top:778px" width="7" height="8" viewBox="0 0 7 8"><path d="M0 0.5V7.5H4L7 4L4 0.5Z" fill="#cc55dd"/></svg>
<svg style="left:925px;top:777px" width="10" height="10" viewBox="0 0 10 10"><circle cx="5" cy="5" r="4.2" fill="none" stroke="#777" stroke-width="1.1"/></svg>
<svg style="left:685px;top:796px" width="16" height="16" viewBox="0 0 16 16"><path d="M3.5 1.5H12.5M3.5 14.5H12.5M1.5 3.5V12.5M14.5 3.5V12.5" stroke="#ddd" stroke-width="1"/><rect x="0" y="0" width="3" height="3" fill="#eee"/><rect x="13" y="0" width="3" height="3" fill="#eee"/><rect x="0" y="13" width="3" height="3" fill="#eee"/><rect x="13" y="13" width="3" height="3" fill="#eee"/><path d="M4.5 4H11.5V6.5H9.3V12H6.7V6.5H4.5Z" fill="#e8d870"/></svg>
<div class="t" style="left:705px;top:798px;color:#9a9a9a">Cursor</div>
<div class="a" style="left:898px;top:796px;width:21px;height:16px;background:#2a2a2a;border-radius:3px"></div>
<div class="a" style="left:908px;top:796px;width:1px;height:16px;background:#222"></div>
<svg style="left:900px;top:800px" width="7" height="8" viewBox="0 0 7 8"><path d="M7 0.5V7.5H3L0 4L3 0.5Z" fill="#777"/></svg>
<svg style="left:910px;top:800px" width="7" height="8" viewBox="0 0 7 8"><path d="M0 0.5V7.5H4L7 4L4 0.5Z" fill="#cc55dd"/></svg>
<svg style="left:925px;top:799px" width="10" height="10" viewBox="0 0 10 10"><circle cx="5" cy="5" r="4.2" fill="none" stroke="#777" stroke-width="1.1"/></svg>
<div class="a" style="left:940px;top:706px;width:10px;height:252px;background:#4a4a4a;border-radius:5px"></div>
<div class="a" style="left:495px;top:964px;width:441px;height:10px;background:#4a4a4a;border-radius:5px"></div>
<div class="a" style="left:959px;top:663px;width:955px;height:24px;background:#2a2a2a"></div>
<svg style="left:0px;top:679px" width="1920" height="8" viewBox="0 0 1920 8"><rect x="965.60" y="0" width="1" height="8" fill="#999"/><rect x="981.25" y="4" width="1" height="4" fill="#999"/><rect x="996.91" y="4" width="1" height="4" fill="#999"/><rect x="1012.56" y="4" width="1" height="4" fill="#999"/><rect x="1028.22" y="4" width="1" height="4" fill="#999"/><rect x="1043.87" y="0" width="1" height="8" fill="#999"/><rect x="1059.52" y="4" width="1" height="4" fill="#999"/><rect x="1075.18" y="4" width="1" height="4" fill="#999"/><rect x="1090.83" y="4" width="1" height="4" fill="#999"/><rect x="1106.49" y="4" width="1" height="4" fill="#999"/><rect x="1122.14" y="0" width="1" height="8" fill="#999"/><rect x="1137.79" y="4" width="1" height="4" fill="#999"/><rect x="1153.45" y="4" width="1" height="4" fill="#999"/><rect x="1169.10" y="4" width="1" height="4" fill="#999"/><rect x="1184.76" y="4" width="1" height="4" fill="#999"/><rect x="1200.41" y="0" width="1" height="8" fill="#999"/><rect x="1216.06" y="4" width="1" height="4" fill="#999"/><rect x="1231.72" y="4" width="1" height="4" fill="#999"/><rect x="1247.37" y="4" width="1" height="4" fill="#999"/><rect x="1263.03" y="4" width="1" height="4" fill="#999"/><rect x="1278.68" y="0" width="1" height="8" fill="#999"/><rect x="1294.33" y="4" width="1" height="4" fill="#999"/><rect x="1309.99" y="4" width="1" height="4" fill="#999"/><rect x="1325.64" y="4" width="1" height="4" fill="#999"/><rect x="1341.30" y="4" width="1" height="4" fill="#999"/><rect x="1356.95" y="0" width="1" height="8" fill="#999"/><rect x="1372.60" y="4" width="1" height="4" fill="#999"/><rect x="1388.26" y="4" width="1" height="4" fill="#999"/><rect x="1403.91" y="4" width="1" height="4" fill="#999"/><rect x="1419.57" y="4" width="1" height="4" fill="#999"/><rect x="1435.22" y="0" width="1" height="8" fill="#999"/><rect x="1450.87" y="4" width="1" height="4" fill="#999"/><rect x="1466.53" y="4" width="1" height="4" fill="#999"/><rect x="1482.18" y="4" width="1" height="4" fill="#999"/><rect x="1497.84" y="4" width="1" height="4" fill="#999"/><rect x="1513.49" y="0" width="1" height="8" fill="#999"/><rect x="1529.14" y="4" width="1" height="4" fill="#999"/><rect x="1544.80" y="4" width="1" height="4" fill="#999"/><rect x="1560.45" y="4" width="1" height="4" fill="#999"/><rect x="1576.11" y="4" width="1" height="4" fill="#999"/><rect x="1591.76" y="0" width="1" height="8" fill="#999"/><rect x="1607.41" y="4" width="1" height="4" fill="#999"/><rect x="1623.07" y="4" width="1" height="4" fill="#999"/><rect x="1638.72" y="4" width="1" height="4" fill="#999"/><rect x="1654.38" y="4" width="1" height="4" fill="#999"/><rect x="1670.03" y="0" width="1" height="8" fill="#999"/><rect x="1685.68" y="4" width="1" height="4" fill="#999"/><rect x="1701.34" y="4" width="1" height="4" fill="#999"/><rect x="1716.99" y="4" width="1" height="4" fill="#999"/><rect x="1732.65" y="4" width="1" height="4" fill="#999"/><rect x="1748.30" y="0" width="1" height="8" fill="#999"/><rect x="1763.95" y="4" width="1" height="4" fill="#999"/><rect x="1779.61" y="4" width="1" height="4" fill="#999"/><rect x="1795.26" y="4" width="1" height="4" fill="#999"/><rect x="1810.92" y="4" width="1" height="4" fill="#999"/><rect x="1826.57" y="0" width="1" height="8" fill="#999"/><rect x="1842.22" y="4" width="1" height="4" fill="#999"/><rect x="1857.88" y="4" width="1" height="4" fill="#999"/><rect x="1873.53" y="4" width="1" height="4" fill="#999"/><rect x="1889.19" y="4" width="1" height="4" fill="#999"/><rect x="1904.84" y="0" width="1" height="8" fill="#999"/></svg>
<div class="t" style="left:946.1px;top:665px;width:40px;text-align:center;color:#e0e0e0">0</div>
<div class="t" style="left:1024.4px;top:665px;width:40px;text-align:center;color:#e0e0e0">10</div>
<div class="t" style="left:1102.6px;top:665px;width:40px;text-align:center;color:#e0e0e0">20</div>
<div class="t" style="left:1180.9px;top:665px;width:40px;text-align:center;color:#e0e0e0">30</div>
<div class="t" style="left:1259.2px;top:665px;width:40px;text-align:center;color:#e0e0e0">40</div>
<div class="t" style="left:1337.5px;top:665px;width:40px;text-align:center;color:#e0e0e0">50</div>
<div class="t" style="left:1415.7px;top:665px;width:40px;text-align:center;color:#e0e0e0">60</div>
<div class="t" style="left:1494.0px;top:665px;width:40px;text-align:center;color:#e0e0e0">70</div>
<div class="t" style="left:1572.3px;top:665px;width:40px;text-align:center;color:#e0e0e0">80</div>
<div class="t" style="left:1650.5px;top:665px;width:40px;text-align:center;color:#e0e0e0">90</div>
<div class="t" style="left:1728.8px;top:665px;width:40px;text-align:center;color:#e0e0e0">100</div>
<div class="t" style="left:1807.1px;top:665px;width:40px;text-align:center;color:#e0e0e0">110</div>
<div class="t" style="left:1885.3px;top:665px;width:40px;text-align:center;color:#e0e0e0">120</div>
<div class="a" style="left:968px;top:687px;width:946px;height:17px;background:#474747"></div>
<div class="a" style="left:963px;top:686px;width:5px;height:17px;background:#6cc6aa;border-radius:1px"></div>
<div class="a" style="left:1905px;top:686px;width:5px;height:17px;background:#6cc6aa;border-radius:1px"></div>
<div class="a" style="left:959px;top:705px;width:9px;height:257px;background:#232323"></div>
<div class="a" style="left:968px;top:706px;width:946px;height:19px;background:#b88cf8;border-radius:3px 0 0 3px"></div>
<div class="t" style="left:976px;top:709px;color:#f4f4f4">Main</div>
<div class="a" style="left:968px;top:729px;width:946px;height:18px;background:repeating-linear-gradient(-45deg,#7aa8f8 0px,#7aa8f8 1.5px,#5b84d4 1.5px,#5b84d4 12.7px,#7aa8f8 12.7px,#7aa8f8 14.2px,#678fe6 14.2px,#678fe6 25.5px);border-radius:3px 0 0 3px"></div>
<div class="t" style="left:976px;top:731px;color:#f4f4f4">String Manipulator [Cavalry Typing Text]</div>
<div class="a" style="left:972px;top:757px;width:462px;height:2px;background:#6a9ae8"></div>
<svg style="left:963px;top:753px" width="11" height="11" viewBox="0 0 11 11"><path d="M5.5 0.5L10.5 5.5L5.5 10.5L0.5 5.5Z" fill="#bbb"/></svg>
<svg style="left:1431px;top:753px" width="11" height="11" viewBox="0 0 11 11"><path d="M5.5 0.5L10.5 5.5L5.5 10.5L0.5 5.5Z" fill="#bbb"/></svg>
<div class="a" style="left:968px;top:773px;width:946px;height:18px;background:linear-gradient(90deg,#efdcfb 1px,transparent 1px) 0 0/3px 3px,linear-gradient(#efdcfb 1px,transparent 1px) 0 0/3px 3px,#b68af2;border:1px solid #e4e0e8;border-radius:3px 0 0 3px"></div>
<div class="t" style="left:976px;top:775px;color:#ffffff;text-shadow:0 0 1px #b68af2,0 0 1px #b68af2">Cavalry Typing Text</div>
<div class="a" style="left:968px;top:795px;width:946px;height:18px;background:#b88cf8;border-radius:3px 0 0 3px"></div>
<div class="t" style="left:976px;top:797px;color:#f4f4f4">Cursor</div>
<div class="a" style="left:1905px;top:705px;width:9px;height:110px;background:rgba(40,20,60,0.3)"></div>
<div class="a" style="left:1435.5px;top:686px;width:1px;height:274px;background:#6cc6aa"></div>
<svg style="left:1429px;top:676px" width="15" height="11" viewBox="0 0 15 11"><path d="M0.5 0.5H14.5L7.5 10.5Z" fill="#6cc6aa"/></svg>
<div class="a" style="left:959px;top:962px;width:955px;height:14px;background:#2b2b2b"></div>
<div class="a" style="left:986px;top:964px;width:841px;height:10px;background:#505050;border-radius:5px"></div>
<div class="a" style="left:494px;top:976px;width:458px;height:22px;background:#424242"></div>
<div class="a" style="left:497px;top:977px;width:19px;height:19px;background:#2e2e2e;border:1px solid #1e1e1e;border-radius:4px"></div>
<svg style="left:500px;top:982px" width="14" height="9" viewBox="0 0 14 9"><path d="M4 0.5H14.5V8.5H4L0.5 4.5Z" fill="#d6d6d6"/><circle cx="5.2" cy="4.5" r="1.5" fill="#333"/></svg>
<div class="t" style="left:520px;top:981px;color:#e6e6e6;letter-spacing:-0.269px">1 selected</div>
<div class="a" style="left:744px;top:977px;width:19px;height:19px;background:#2e2e2e;border:1px solid #1e1e1e;border-radius:4px"></div>
<svg style="left:748px;top:981px" width="11" height="11" viewBox="0 0 11 11"><rect x="0.5" y="0.5" width="10" height="10" fill="none" stroke="#ddd" stroke-width="1"/><rect x="4" y="4" width="3" height="3" fill="#ddd"/></svg>
<div class="a" style="left:766px;top:978px;width:182px;height:18px;background:#555;border-radius:4px"></div>
<div class="a" style="left:767px;top:979px;width:86px;height:16px;background:#2a2a2a;border-radius:3px"></div>
<svg style="left:773px;top:981px" width="12" height="11" viewBox="0 0 12 11"><path d="M0 1H10M2 5.5H12M0 10H10" stroke="#2ecc71" stroke-width="2"/></svg>
<div class="t" style="left:789px;top:981px;color:#e6e6e6;letter-spacing:0.009px">Time Editor</div>
<svg style="left:862px;top:981px" width="12" height="12" viewBox="0 0 12 12"><path d="M0.5 0V11.5H12" stroke="#bbb" stroke-width="1" fill="none"/><path d="M1 11L11 3" stroke="#bbb" stroke-width="1"/></svg>
<div class="t" style="left:878px;top:981px;color:#e6e6e6;letter-spacing:-0.085px">Graph Editor</div>
<div class="a" style="left:959px;top:976px;width:955px;height:22px;background:#424242"></div>
<div class="a" style="left:962px;top:978px;width:17px;height:18px;background:#2e2e2e;border:1px solid #1e1e1e;border-radius:4px"></div>
<svg style="left:964px;top:981px" width="13" height="12" viewBox="0 0 13 12"><rect x="0" y="0.5" width="13" height="1.5" fill="#ddd"/><rect x="0" y="5" width="2" height="1.5" fill="#ddd"/><rect x="3" y="5" width="10" height="1.5" fill="#ddd"/><rect x="0" y="9.5" width="5" height="1.5" fill="#ddd"/><rect x="7" y="9.5" width="2" height="1.5" fill="#ddd"/><path d="M13 10L11 12H13Z" fill="#2ecc71"/></svg>
<div class="a" style="left:983px;top:979px;width:150px;height:16px;background:#2a2a2a;border-radius:3px"></div>
<div class="t" style="left:986px;top:981px;color:#e6e6e6;letter-spacing:-0.138px">Default Keyframe Layer</div>
<div class="a" style="left:1139px;top:979px;width:70px;height:16px;background:#2a2a2a;border-radius:3px"></div>
<div class="t" style="left:1143px;top:981px;color:#555">F</div>
<div class="t" style="left:1155px;top:981px;color:#ddd">-</div>
<div class="t" style="left:1215px;top:981px;color:#e6e6e6">Align:</div>
<div class="a" style="left:1252px;top:978px;width:53px;height:18px;background:#2a2a2a;border:1px solid #1e1e1e;border-radius:4px"></div>
<div class="a" style="left:1269px;top:979px;width:1px;height:16px;background:#1e1e1e"></div>
<div class="a" style="left:1287px;top:979px;width:1px;height:16px;background:#1e1e1e"></div>
<svg style="left:1254px;top:980px" width="14" height="14" viewBox="0 0 14 14"><rect x="1" y="0" width="1" height="14" fill="#ddd"/><rect x="3.5" y="3" width="2" height="2" fill="#6cc6aa"/><rect x="6.5" y="3" width="4" height="2" fill="#ddd"/><rect x="3.5" y="9" width="2" height="2" fill="#6cc6aa"/><rect x="6.5" y="9" width="6" height="2" fill="#ddd"/></svg>
<svg style="left:1271px;top:980px" width="14" height="14" viewBox="0 0 14 14"><rect x="6.5" y="0" width="1" height="14" fill="#ddd"/><rect x="3" y="3" width="2" height="2" fill="#ddd"/><rect x="6" y="3" width="2" height="2" fill="#6cc6aa"/><rect x="9" y="3" width="2" height="2" fill="#ddd"/><rect x="1" y="9" width="3" height="2" fill="#ddd"/><rect x="6" y="9" width="2" height="2" fill="#6cc6aa"/><rect x="10" y="9" width="3" height="2" fill="#ddd"/></svg>
<svg style="left:1289px;top:980px" width="14" height="14" viewBox="0 0 14 14"><rect x="12" y="0" width="1" height="14" fill="#ddd"/><rect x="6" y="3" width="3" height="2" fill="#ddd"/><rect x="9.5" y="3" width="2" height="2" fill="#6cc6aa"/><rect x="2" y="9" width="7" height="2" fill="#ddd"/><rect x="9.5" y="9" width="2" height="2" fill="#6cc6aa"/></svg>
<div class="a" style="left:1308px;top:978px;width:18px;height:18px;background:#2a2a2a;border:1px solid #1e1e1e;border-radius:4px"></div>
<svg style="left:1310px;top:980px" width="14" height="14" viewBox="0 0 14 14"><rect x="1.5" y="1.5" width="11" height="11" fill="none" stroke="#bbb" stroke-width="1"/><rect x="0" y="0" width="3" height="3" fill="#bbb"/><rect x="11" y="0" width="3" height="3" fill="#bbb"/><rect x="0" y="11" width="3" height="3" fill="#bbb"/><rect x="11" y="11" width="3" height="3" fill="#bbb"/><rect x="6" y="6" width="2" height="2" fill="#ddd"/></svg>
<div class="a" style="left:1330px;top:978px;width:31px;height:18px;background:#2a2a2a;border:1px solid #1e1e1e;border-radius:4px"></div>
<div class="a" style="left:1348px;top:979px;width:1px;height:16px;background:#1e1e1e"></div>
<svg style="left:1333px;top:981px;transform:rotate(-45deg)" width="12" height="12" viewBox="0 0 12 12"><path d="M2 11L1.5 6A4.5 4.5 0 0 1 10.5 6L10 11" stroke="#ddd" stroke-width="2" fill="none"/></svg>
<svg style="left:1351px;top:982px" width="7" height="9" viewBox="0 0 7 9"><path d="M0.5 0.5L6 4.5L0.5 8.5Z" fill="none" stroke="#aaa" stroke-width="0.9"/></svg>
<div class="a" style="left:1365px;top:978px;width:31px;height:18px;background:#2a2a2a;border:1px solid #1e1e1e;border-radius:4px"></div>
<div class="a" style="left:1382px;top:979px;width:1px;height:16px;background:#1e1e1e"></div>
<svg style="left:1367px;top:980px" width="14" height="14" viewBox="0 0 14 14"><path d="M0 7.5H3.5M10.5 7.5H14" stroke="#ddd" stroke-width="1"/><path d="M4.5 1V14M7.5 5V10M9.5 3V12" stroke="#ddd" stroke-width="1"/></svg>
<svg style="left:1386px;top:982px" width="7" height="9" viewBox="0 0 7 9"><path d="M0.5 0.5L6 4.5L0.5 8.5Z" fill="none" stroke="#aaa" stroke-width="0.9"/></svg>
<svg style="left:1743px;top:980px" width="14" height="14" viewBox="0 0 14 14"><circle cx="6" cy="6" r="5.2" fill="none" stroke="#ccc" stroke-width="1.1"/><path d="M3.5 6H8.5" stroke="#ccc" stroke-width="1.1"/><path d="M9.8 9.8L12.5 12.5" stroke="#ccc" stroke-width="1.6"/></svg>
<div class="a" style="left:1763px;top:986px;width:119px;height:4px;background:#3a3a3a;border-radius:2px"></div>
<div class="a" style="left:1763px;top:986px;width:62px;height:4px;background:#e6e6e6;border-radius:2px"></div>
<svg style="left:1819px;top:982px" width="12" height="12" viewBox="0 0 12 12"><circle cx="6" cy="6" r="5" fill="#6dbf9d" stroke="#333" stroke-width="0.8"/><circle cx="6" cy="6" r="2" fill="#5aa888"/></svg>
<svg style="left:1887px;top:980px" width="14" height="14" viewBox="0 0 14 14"><circle cx="6" cy="6" r="5.2" fill="none" stroke="#ccc" stroke-width="1.1"/><path d="M3.5 6H8.5M6 3.5V8.5" stroke="#ccc" stroke-width="1.1"/><path d="M9.8 9.8L12.5 12.5" stroke="#ccc" stroke-width="1.6"/></svg>
<!-- p6 -->
<div class="a" style="left:494px;top:998px;width:1420px;height:6px;background:#121212"></div>
<div class="a" style="left:494px;top:1004px;width:1420px;height:22px;background:#3a3a3a"></div>
<div class="a" style="left:498px;top:1010px;width:3px;height:3px;background:#888"></div>
<div class="a" style="left:498px;top:1015px;width:3px;height:3px;background:#888"></div>
<div class="a" style="left:498px;top:1020px;width:3px;height:3px;background:#888"></div>
<div class="a" style="left:507px;top:1006px;width:17px;height:18px;background:#2a2a2a;border:1px solid #1e1e1e;border-radius:4px"></div>
<svg style="left:509px;top:1009px" width="13" height="12" viewBox="0 0 13 12"><path d="M0.5 0.5H12.5V9H8L10 11.5L5.5 9H0.5Z" fill="#e0e0e0"/><rect x="2" y="2.5" width="2" height="1" fill="#333"/><rect x="5" y="2.5" width="6" height="1" fill="#333"/><rect x="2" y="5" width="2" height="1" fill="#333"/><rect x="5" y="5" width="6" height="1" fill="#333"/></svg>
<div class="a" style="left:528px;top:1007px;width:18px;height:15px;background:#2ecc71;border-radius:2px"></div>
<div class="t" style="left:533px;top:1009px;color:#1a3a1a">7</div>
<svg style="left:554px;top:1011px" width="8" height="8" viewBox="0 0 8 8"><circle cx="4" cy="4" r="3.5" fill="#2ecc71"/></svg>
<div class="t" style="left:565px;top:1009px;color:#e6e6e6;letter-spacing:-0.085px">Saved scene to: D:/DATA/AI Creator/Cavalry/text.cv.</div>
<div class="t" style="left:1360px;top:1009px;color:#e6e6e6;font-style:italic;letter-spacing:-0.761px">Click to see next message</div>
<div class="a" style="left:1488px;top:1006px;width:79px;height:18px;background:#d4bc6c;border-radius:3px"></div>
<div class="t" style="left:1494px;top:1009px;color:#2a2a1a;letter-spacing:-0.461px">Feedback</div>
<svg style="left:1549px;top:1008px" width="13" height="14" viewBox="0 0 13 14"><path d="M0.5 0.5H8L12.5 5V13.5H0.5Z" fill="#f4f4f4"/><path d="M4 11L10 5L12 7L6 13L3.5 13.5Z" fill="#f08a3c"/></svg>
<div class="a" style="left:1571px;top:1006px;width:109px;height:18px;background:#2ecc71;border-radius:3px"></div>
<div class="t" style="left:1576px;top:1009px;color:#14321e;letter-spacing:-0.169px">Upgrade to Pro</div>
<svg style="left:1659px;top:1009px" width="14" height="13" viewBox="0 0 14 13"><path d="M0.5 4Q2 0.5 4 3L6.5 8Q7 11 4 12Q0 12 0.5 4Z" fill="#f2b430"/><path d="M13.5 4Q12 0.5 10 3L7.5 8Q7 11 10 12Q14 12 13.5 4Z" fill="#f2b430"/></svg>
<div class="a" style="left:1684px;top:1006px;width:117px;height:18px;background:#b88cf8;border-radius:3px"></div>
<div class="t" style="left:1688px;top:1009px;color:#2a1a40;letter-spacing:-0.053px">Update Available</div>
<svg style="left:1780px;top:1007px" width="15" height="16" viewBox="0 0 15 16"><circle cx="8" cy="8.5" r="7" fill="#f6c040"/><path d="M1 6L8 1L14 5L9 8Z" fill="#8a5ae0"/><circle cx="5" cy="9" r="1" fill="#333"/><circle cx="11" cy="9" r="1" fill="#333"/><rect x="11" y="10" width="4" height="3" fill="#4ab8e8"/></svg>
<div class="a" style="left:1805px;top:1006px;width:106px;height:18px;background:#3aaeee;border-radius:3px"></div>
<div class="t" style="left:1810px;top:1009px;color:#14204a;letter-spacing:-0.283px">Tips and Tricks</div>
<svg style="left:1890px;top:1007px" width="15" height="15" viewBox="0 0 15 15"><path d="M14 1Q8 1 4 7L8 11Q14 7 14 1Z" fill="#f4f4f4"/><circle cx="10" cy="5" r="1.5" fill="#4ab8e8"/><path d="M4 7L1 8L3 10Z M8 11L7 14L5 12Z" fill="#e83a3a"/><path d="M3 11L1 14L4 12Z" fill="#f6a030"/></svg>
</body></html>
